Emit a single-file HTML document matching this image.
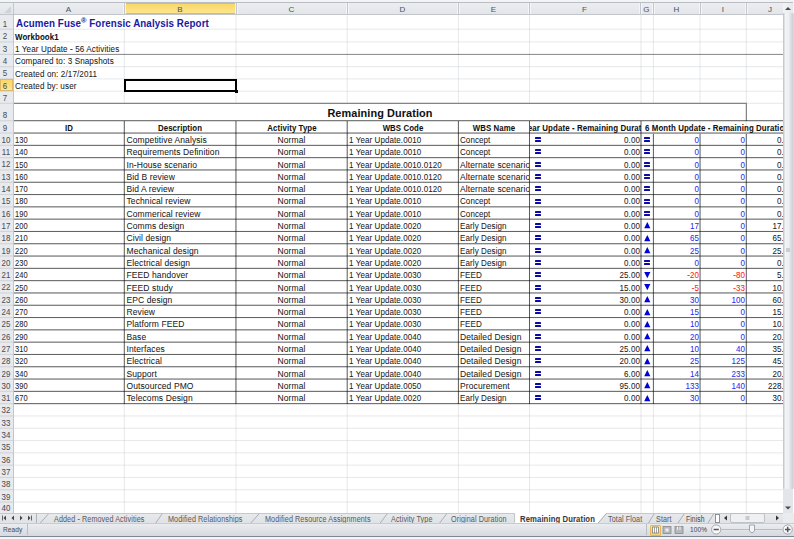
<!DOCTYPE html>
<html><head><meta charset="utf-8"><style>
html,body{margin:0;padding:0;}
body{width:794px;height:539px;overflow:hidden;position:relative;background:#fff;font-family:"Liberation Sans", sans-serif;}
div,svg{position:absolute;}
.t{white-space:nowrap;letter-spacing:0.1px;-webkit-text-stroke:0.05px currentColor}
</style></head><body>
<div style="left:0px;top:0px;width:794px;height:2px;background:#f1f3f5"></div>
<div style="left:0px;top:2px;width:793px;height:1px;background:#babec4"></div>
<div style="left:0px;top:3px;width:783px;height:11px;background:linear-gradient(#ebedf0,#e3e6e9)"></div>
<div style="left:0px;top:14px;width:783px;height:1px;background:#c2c6cc"></div>
<div style="left:124px;top:3px;width:112px;height:11px;background:linear-gradient(#f9d566,#fde88f);box-shadow:inset 0 0 0 1px #e2b860"></div>
<svg style="position:absolute;left:0;top:3px" width="13" height="11"><path d="M4 10 L11 3 L11 10 Z" fill="#d0d4da"/></svg>
<div style="left:13px;top:3px;width:1px;height:11px;background:#c3c7cd"></div>
<div style="left:123px;top:3px;width:1px;height:11px;background:#f4f5f7"></div>
<div style="left:125px;top:3px;width:1px;height:11px;background:#f4f5f7"></div>
<div style="left:124px;top:3px;width:1px;height:11px;background:#c3c7cd"></div>
<div style="left:235px;top:3px;width:1px;height:11px;background:#f4f5f7"></div>
<div style="left:237px;top:3px;width:1px;height:11px;background:#f4f5f7"></div>
<div style="left:236px;top:3px;width:1px;height:11px;background:#c3c7cd"></div>
<div style="left:346px;top:3px;width:1px;height:11px;background:#f4f5f7"></div>
<div style="left:348px;top:3px;width:1px;height:11px;background:#f4f5f7"></div>
<div style="left:347px;top:3px;width:1px;height:11px;background:#c3c7cd"></div>
<div style="left:457px;top:3px;width:1px;height:11px;background:#f4f5f7"></div>
<div style="left:459px;top:3px;width:1px;height:11px;background:#f4f5f7"></div>
<div style="left:458px;top:3px;width:1px;height:11px;background:#c3c7cd"></div>
<div style="left:528px;top:3px;width:1px;height:11px;background:#f4f5f7"></div>
<div style="left:530px;top:3px;width:1px;height:11px;background:#f4f5f7"></div>
<div style="left:529px;top:3px;width:1px;height:11px;background:#c3c7cd"></div>
<div style="left:639px;top:3px;width:1px;height:11px;background:#f4f5f7"></div>
<div style="left:641px;top:3px;width:1px;height:11px;background:#f4f5f7"></div>
<div style="left:640px;top:3px;width:1px;height:11px;background:#c3c7cd"></div>
<div style="left:652px;top:3px;width:1px;height:11px;background:#f4f5f7"></div>
<div style="left:654px;top:3px;width:1px;height:11px;background:#f4f5f7"></div>
<div style="left:653px;top:3px;width:1px;height:11px;background:#c3c7cd"></div>
<div style="left:699px;top:3px;width:1px;height:11px;background:#f4f5f7"></div>
<div style="left:701px;top:3px;width:1px;height:11px;background:#f4f5f7"></div>
<div style="left:700px;top:3px;width:1px;height:11px;background:#c3c7cd"></div>
<div style="left:745px;top:3px;width:1px;height:11px;background:#f4f5f7"></div>
<div style="left:747px;top:3px;width:1px;height:11px;background:#f4f5f7"></div>
<div style="left:746px;top:3px;width:1px;height:11px;background:#c3c7cd"></div>
<div class="t" style="left:-231.5px;width:600px;text-align:center;top:3.73px;font-size:8px;line-height:11px;font-weight:400;color:#4c5564;">A</div>
<div class="t" style="left:-120.0px;width:600px;text-align:center;top:3.73px;font-size:8px;line-height:11px;font-weight:400;color:#4c5564;">B</div>
<div class="t" style="left:-8.5px;width:600px;text-align:center;top:3.73px;font-size:8px;line-height:11px;font-weight:400;color:#4c5564;">C</div>
<div class="t" style="left:102.5px;width:600px;text-align:center;top:3.73px;font-size:8px;line-height:11px;font-weight:400;color:#4c5564;">D</div>
<div class="t" style="left:193.5px;width:600px;text-align:center;top:3.73px;font-size:8px;line-height:11px;font-weight:400;color:#4c5564;">E</div>
<div class="t" style="left:284.5px;width:600px;text-align:center;top:3.73px;font-size:8px;line-height:11px;font-weight:400;color:#4c5564;">F</div>
<div class="t" style="left:346.5px;width:600px;text-align:center;top:3.73px;font-size:8px;line-height:11px;font-weight:400;color:#4c5564;">G</div>
<div class="t" style="left:376.5px;width:600px;text-align:center;top:3.73px;font-size:8px;line-height:11px;font-weight:400;color:#4c5564;">H</div>
<div class="t" style="left:423.0px;width:600px;text-align:center;top:3.73px;font-size:8px;line-height:11px;font-weight:400;color:#4c5564;">I</div>
<div class="t" style="left:470.0px;width:600px;text-align:center;top:3.73px;font-size:8px;line-height:11px;font-weight:400;color:#4c5564;">J</div>
<div style="left:0px;top:15px;width:13px;height:498px;background:#e8eaed"></div>
<div style="left:13px;top:15px;width:1px;height:498px;background:#c2c6cc"></div>
<div style="left:0px;top:79px;width:13px;height:12px;background:linear-gradient(#f9d566,#fde88f);box-shadow:inset 0 0 0 1px #e2b860"></div>
<div style="left:0px;top:28px;width:13px;height:1px;background:rgba(190,194,200,0.180)"></div>
<div style="left:0px;top:29px;width:13px;height:1px;background:rgba(190,194,200,0.420)"></div>
<div style="left:0px;top:15px;width:13px;height:15px;overflow:hidden"><div class="t" style="left:-294.6px;width:600px;text-align:center;top:2.72px;font-size:8.6px;line-height:12px;font-weight:400;color:#4a4f58;transform:scaleX(0.92);transform-origin:center 0;">1</div></div>
<div style="left:0px;top:41px;width:13px;height:1px;background:rgba(190,194,200,0.360)"></div>
<div style="left:0px;top:42px;width:13px;height:1px;background:rgba(190,194,200,0.240)"></div>
<div style="left:0px;top:30px;width:13px;height:12px;overflow:hidden"><div class="t" style="left:-294.6px;width:600px;text-align:center;top:0.42px;font-size:8.6px;line-height:12px;font-weight:400;color:#4a4f58;transform:scaleX(0.92);transform-origin:center 0;">2</div></div>
<div style="left:0px;top:53px;width:13px;height:1px;background:rgba(190,194,200,0.060)"></div>
<div style="left:0px;top:54px;width:13px;height:1px;background:rgba(190,194,200,0.540)"></div>
<div style="left:0px;top:42px;width:13px;height:13px;overflow:hidden"><div class="t" style="left:-294.6px;width:600px;text-align:center;top:0.92px;font-size:8.6px;line-height:12px;font-weight:400;color:#4a4f58;transform:scaleX(0.92);transform-origin:center 0;">3</div></div>
<div style="left:0px;top:66px;width:13px;height:1px;background:rgba(190,194,200,0.480)"></div>
<div style="left:0px;top:67px;width:13px;height:1px;background:rgba(190,194,200,0.120)"></div>
<div style="left:0px;top:55px;width:13px;height:12px;overflow:hidden"><div class="t" style="left:-294.6px;width:600px;text-align:center;top:0.22px;font-size:8.6px;line-height:12px;font-weight:400;color:#4a4f58;transform:scaleX(0.92);transform-origin:center 0;">4</div></div>
<div style="left:0px;top:78px;width:13px;height:1px;background:rgba(190,194,200,0.360)"></div>
<div style="left:0px;top:79px;width:13px;height:1px;background:rgba(190,194,200,0.240)"></div>
<div style="left:0px;top:67px;width:13px;height:12px;overflow:hidden"><div class="t" style="left:-294.6px;width:600px;text-align:center;top:0.42px;font-size:8.6px;line-height:12px;font-weight:400;color:#4a4f58;transform:scaleX(0.92);transform-origin:center 0;">5</div></div>
<div style="left:0px;top:90px;width:13px;height:1px;background:rgba(190,194,200,0.180)"></div>
<div style="left:0px;top:91px;width:13px;height:1px;background:rgba(190,194,200,0.420)"></div>
<div style="left:0px;top:79px;width:13px;height:13px;overflow:hidden"><div class="t" style="left:-294.6px;width:600px;text-align:center;top:0.72px;font-size:8.6px;line-height:12px;font-weight:400;color:#4a4f58;transform:scaleX(0.92);transform-origin:center 0;">6</div></div>
<div style="left:0px;top:102px;width:13px;height:1px;background:rgba(190,194,200,0.120)"></div>
<div style="left:0px;top:103px;width:13px;height:1px;background:rgba(190,194,200,0.480)"></div>
<div style="left:0px;top:92px;width:13px;height:12px;overflow:hidden"><div class="t" style="left:-294.6px;width:600px;text-align:center;top:-0.18px;font-size:8.6px;line-height:12px;font-weight:400;color:#4a4f58;transform:scaleX(0.92);transform-origin:center 0;">7</div></div>
<div style="left:0px;top:120px;width:13px;height:1px;background:rgba(190,194,200,0.480)"></div>
<div style="left:0px;top:121px;width:13px;height:1px;background:rgba(190,194,200,0.120)"></div>
<div style="left:0px;top:104px;width:13px;height:17px;overflow:hidden"><div class="t" style="left:-294.6px;width:600px;text-align:center;top:5.22px;font-size:8.6px;line-height:12px;font-weight:400;color:#4a4f58;transform:scaleX(0.92);transform-origin:center 0;">8</div></div>
<div style="left:0px;top:132px;width:13px;height:1px;background:rgba(190,194,200,0.270)"></div>
<div style="left:0px;top:133px;width:13px;height:1px;background:rgba(190,194,200,0.330)"></div>
<div style="left:0px;top:121px;width:13px;height:13px;overflow:hidden"><div class="t" style="left:-294.6px;width:600px;text-align:center;top:0.57px;font-size:8.6px;line-height:12px;font-weight:400;color:#4a4f58;transform:scaleX(0.92);transform-origin:center 0;">9</div></div>
<div style="left:0px;top:144px;width:13px;height:1px;background:rgba(190,194,200,0.090)"></div>
<div style="left:0px;top:145px;width:13px;height:1px;background:rgba(190,194,200,0.510)"></div>
<div style="left:0px;top:134px;width:13px;height:12px;overflow:hidden"><div class="t" style="left:-294.2px;width:600px;text-align:center;top:-0.13px;font-size:8.6px;line-height:12px;font-weight:400;color:#4a4f58;transform:scaleX(0.92);transform-origin:center 0;">10</div></div>
<div style="left:0px;top:157px;width:13px;height:1px;background:rgba(190,194,200,0.510)"></div>
<div style="left:0px;top:158px;width:13px;height:1px;background:rgba(190,194,200,0.090)"></div>
<div style="left:0px;top:146px;width:13px;height:12px;overflow:hidden"><div class="t" style="left:-294.2px;width:600px;text-align:center;top:0.17px;font-size:8.6px;line-height:12px;font-weight:400;color:#4a4f58;transform:scaleX(0.92);transform-origin:center 0;">11</div></div>
<div style="left:0px;top:169px;width:13px;height:1px;background:rgba(190,194,200,0.330)"></div>
<div style="left:0px;top:170px;width:13px;height:1px;background:rgba(190,194,200,0.270)"></div>
<div style="left:0px;top:158px;width:13px;height:12px;overflow:hidden"><div class="t" style="left:-294.2px;width:600px;text-align:center;top:0.47px;font-size:8.6px;line-height:12px;font-weight:400;color:#4a4f58;transform:scaleX(0.92);transform-origin:center 0;">12</div></div>
<div style="left:0px;top:181px;width:13px;height:1px;background:rgba(190,194,200,0.150)"></div>
<div style="left:0px;top:182px;width:13px;height:1px;background:rgba(190,194,200,0.450)"></div>
<div style="left:0px;top:170px;width:13px;height:13px;overflow:hidden"><div class="t" style="left:-294.2px;width:600px;text-align:center;top:0.77px;font-size:8.6px;line-height:12px;font-weight:400;color:#4a4f58;transform:scaleX(0.92);transform-origin:center 0;">13</div></div>
<div style="left:0px;top:194px;width:13px;height:1px;background:rgba(190,194,200,0.570)"></div>
<div style="left:0px;top:195px;width:13px;height:1px;background:rgba(190,194,200,0.030)"></div>
<div style="left:0px;top:183px;width:13px;height:12px;overflow:hidden"><div class="t" style="left:-294.2px;width:600px;text-align:center;top:0.07px;font-size:8.6px;line-height:12px;font-weight:400;color:#4a4f58;transform:scaleX(0.92);transform-origin:center 0;">14</div></div>
<div style="left:0px;top:206px;width:13px;height:1px;background:rgba(190,194,200,0.390)"></div>
<div style="left:0px;top:207px;width:13px;height:1px;background:rgba(190,194,200,0.210)"></div>
<div style="left:0px;top:195px;width:13px;height:12px;overflow:hidden"><div class="t" style="left:-294.2px;width:600px;text-align:center;top:0.37px;font-size:8.6px;line-height:12px;font-weight:400;color:#4a4f58;transform:scaleX(0.92);transform-origin:center 0;">15</div></div>
<div style="left:0px;top:218px;width:13px;height:1px;background:rgba(190,194,200,0.210)"></div>
<div style="left:0px;top:219px;width:13px;height:1px;background:rgba(190,194,200,0.390)"></div>
<div style="left:0px;top:207px;width:13px;height:13px;overflow:hidden"><div class="t" style="left:-294.2px;width:600px;text-align:center;top:0.67px;font-size:8.6px;line-height:12px;font-weight:400;color:#4a4f58;transform:scaleX(0.92);transform-origin:center 0;">16</div></div>
<div style="left:0px;top:230px;width:13px;height:1px;background:rgba(190,194,200,0.030)"></div>
<div style="left:0px;top:231px;width:13px;height:1px;background:rgba(190,194,200,0.570)"></div>
<div style="left:0px;top:220px;width:13px;height:12px;overflow:hidden"><div class="t" style="left:-294.2px;width:600px;text-align:center;top:-0.03px;font-size:8.6px;line-height:12px;font-weight:400;color:#4a4f58;transform:scaleX(0.92);transform-origin:center 0;">17</div></div>
<div style="left:0px;top:243px;width:13px;height:1px;background:rgba(190,194,200,0.450)"></div>
<div style="left:0px;top:244px;width:13px;height:1px;background:rgba(190,194,200,0.150)"></div>
<div style="left:0px;top:232px;width:13px;height:12px;overflow:hidden"><div class="t" style="left:-294.2px;width:600px;text-align:center;top:0.27px;font-size:8.6px;line-height:12px;font-weight:400;color:#4a4f58;transform:scaleX(0.92);transform-origin:center 0;">18</div></div>
<div style="left:0px;top:255px;width:13px;height:1px;background:rgba(190,194,200,0.270)"></div>
<div style="left:0px;top:256px;width:13px;height:1px;background:rgba(190,194,200,0.330)"></div>
<div style="left:0px;top:244px;width:13px;height:13px;overflow:hidden"><div class="t" style="left:-294.2px;width:600px;text-align:center;top:0.57px;font-size:8.6px;line-height:12px;font-weight:400;color:#4a4f58;transform:scaleX(0.92);transform-origin:center 0;">19</div></div>
<div style="left:0px;top:267px;width:13px;height:1px;background:rgba(190,194,200,0.090)"></div>
<div style="left:0px;top:268px;width:13px;height:1px;background:rgba(190,194,200,0.510)"></div>
<div style="left:0px;top:257px;width:13px;height:12px;overflow:hidden"><div class="t" style="left:-294.2px;width:600px;text-align:center;top:-0.13px;font-size:8.6px;line-height:12px;font-weight:400;color:#4a4f58;transform:scaleX(0.92);transform-origin:center 0;">20</div></div>
<div style="left:0px;top:280px;width:13px;height:1px;background:rgba(190,194,200,0.510)"></div>
<div style="left:0px;top:281px;width:13px;height:1px;background:rgba(190,194,200,0.090)"></div>
<div style="left:0px;top:269px;width:13px;height:12px;overflow:hidden"><div class="t" style="left:-294.2px;width:600px;text-align:center;top:0.17px;font-size:8.6px;line-height:12px;font-weight:400;color:#4a4f58;transform:scaleX(0.92);transform-origin:center 0;">21</div></div>
<div style="left:0px;top:292px;width:13px;height:1px;background:rgba(190,194,200,0.330)"></div>
<div style="left:0px;top:293px;width:13px;height:1px;background:rgba(190,194,200,0.270)"></div>
<div style="left:0px;top:281px;width:13px;height:12px;overflow:hidden"><div class="t" style="left:-294.2px;width:600px;text-align:center;top:0.47px;font-size:8.6px;line-height:12px;font-weight:400;color:#4a4f58;transform:scaleX(0.92);transform-origin:center 0;">22</div></div>
<div style="left:0px;top:304px;width:13px;height:1px;background:rgba(190,194,200,0.150)"></div>
<div style="left:0px;top:305px;width:13px;height:1px;background:rgba(190,194,200,0.450)"></div>
<div style="left:0px;top:293px;width:13px;height:13px;overflow:hidden"><div class="t" style="left:-294.2px;width:600px;text-align:center;top:0.77px;font-size:8.6px;line-height:12px;font-weight:400;color:#4a4f58;transform:scaleX(0.92);transform-origin:center 0;">23</div></div>
<div style="left:0px;top:317px;width:13px;height:1px;background:rgba(190,194,200,0.570)"></div>
<div style="left:0px;top:318px;width:13px;height:1px;background:rgba(190,194,200,0.030)"></div>
<div style="left:0px;top:306px;width:13px;height:12px;overflow:hidden"><div class="t" style="left:-294.2px;width:600px;text-align:center;top:0.07px;font-size:8.6px;line-height:12px;font-weight:400;color:#4a4f58;transform:scaleX(0.92);transform-origin:center 0;">24</div></div>
<div style="left:0px;top:329px;width:13px;height:1px;background:rgba(190,194,200,0.390)"></div>
<div style="left:0px;top:330px;width:13px;height:1px;background:rgba(190,194,200,0.210)"></div>
<div style="left:0px;top:318px;width:13px;height:12px;overflow:hidden"><div class="t" style="left:-294.2px;width:600px;text-align:center;top:0.37px;font-size:8.6px;line-height:12px;font-weight:400;color:#4a4f58;transform:scaleX(0.92);transform-origin:center 0;">25</div></div>
<div style="left:0px;top:341px;width:13px;height:1px;background:rgba(190,194,200,0.210)"></div>
<div style="left:0px;top:342px;width:13px;height:1px;background:rgba(190,194,200,0.390)"></div>
<div style="left:0px;top:330px;width:13px;height:13px;overflow:hidden"><div class="t" style="left:-294.2px;width:600px;text-align:center;top:0.67px;font-size:8.6px;line-height:12px;font-weight:400;color:#4a4f58;transform:scaleX(0.92);transform-origin:center 0;">26</div></div>
<div style="left:0px;top:353px;width:13px;height:1px;background:rgba(190,194,200,0.030)"></div>
<div style="left:0px;top:354px;width:13px;height:1px;background:rgba(190,194,200,0.570)"></div>
<div style="left:0px;top:343px;width:13px;height:12px;overflow:hidden"><div class="t" style="left:-294.2px;width:600px;text-align:center;top:-0.03px;font-size:8.6px;line-height:12px;font-weight:400;color:#4a4f58;transform:scaleX(0.92);transform-origin:center 0;">27</div></div>
<div style="left:0px;top:366px;width:13px;height:1px;background:rgba(190,194,200,0.450)"></div>
<div style="left:0px;top:367px;width:13px;height:1px;background:rgba(190,194,200,0.150)"></div>
<div style="left:0px;top:355px;width:13px;height:12px;overflow:hidden"><div class="t" style="left:-294.2px;width:600px;text-align:center;top:0.27px;font-size:8.6px;line-height:12px;font-weight:400;color:#4a4f58;transform:scaleX(0.92);transform-origin:center 0;">28</div></div>
<div style="left:0px;top:378px;width:13px;height:1px;background:rgba(190,194,200,0.270)"></div>
<div style="left:0px;top:379px;width:13px;height:1px;background:rgba(190,194,200,0.330)"></div>
<div style="left:0px;top:367px;width:13px;height:13px;overflow:hidden"><div class="t" style="left:-294.2px;width:600px;text-align:center;top:0.57px;font-size:8.6px;line-height:12px;font-weight:400;color:#4a4f58;transform:scaleX(0.92);transform-origin:center 0;">29</div></div>
<div style="left:0px;top:390px;width:13px;height:1px;background:rgba(190,194,200,0.090)"></div>
<div style="left:0px;top:391px;width:13px;height:1px;background:rgba(190,194,200,0.510)"></div>
<div style="left:0px;top:380px;width:13px;height:12px;overflow:hidden"><div class="t" style="left:-294.2px;width:600px;text-align:center;top:-0.13px;font-size:8.6px;line-height:12px;font-weight:400;color:#4a4f58;transform:scaleX(0.92);transform-origin:center 0;">30</div></div>
<div style="left:0px;top:403px;width:13px;height:1px;background:rgba(190,194,200,0.510)"></div>
<div style="left:0px;top:404px;width:13px;height:1px;background:rgba(190,194,200,0.090)"></div>
<div style="left:0px;top:392px;width:13px;height:12px;overflow:hidden"><div class="t" style="left:-294.2px;width:600px;text-align:center;top:0.17px;font-size:8.6px;line-height:12px;font-weight:400;color:#4a4f58;transform:scaleX(0.92);transform-origin:center 0;">31</div></div>
<div style="left:0px;top:415px;width:13px;height:1px;background:rgba(190,194,200,0.330)"></div>
<div style="left:0px;top:416px;width:13px;height:1px;background:rgba(190,194,200,0.270)"></div>
<div style="left:0px;top:404px;width:13px;height:12px;overflow:hidden"><div class="t" style="left:-294.2px;width:600px;text-align:center;top:0.47px;font-size:8.6px;line-height:12px;font-weight:400;color:#4a4f58;transform:scaleX(0.92);transform-origin:center 0;">32</div></div>
<div style="left:0px;top:427px;width:13px;height:1px;background:rgba(190,194,200,0.150)"></div>
<div style="left:0px;top:428px;width:13px;height:1px;background:rgba(190,194,200,0.450)"></div>
<div style="left:0px;top:416px;width:13px;height:13px;overflow:hidden"><div class="t" style="left:-294.2px;width:600px;text-align:center;top:0.77px;font-size:8.6px;line-height:12px;font-weight:400;color:#4a4f58;transform:scaleX(0.92);transform-origin:center 0;">33</div></div>
<div style="left:0px;top:440px;width:13px;height:1px;background:rgba(190,194,200,0.570)"></div>
<div style="left:0px;top:441px;width:13px;height:1px;background:rgba(190,194,200,0.030)"></div>
<div style="left:0px;top:429px;width:13px;height:12px;overflow:hidden"><div class="t" style="left:-294.2px;width:600px;text-align:center;top:0.07px;font-size:8.6px;line-height:12px;font-weight:400;color:#4a4f58;transform:scaleX(0.92);transform-origin:center 0;">34</div></div>
<div style="left:0px;top:452px;width:13px;height:1px;background:rgba(190,194,200,0.390)"></div>
<div style="left:0px;top:453px;width:13px;height:1px;background:rgba(190,194,200,0.210)"></div>
<div style="left:0px;top:441px;width:13px;height:12px;overflow:hidden"><div class="t" style="left:-294.2px;width:600px;text-align:center;top:0.37px;font-size:8.6px;line-height:12px;font-weight:400;color:#4a4f58;transform:scaleX(0.92);transform-origin:center 0;">35</div></div>
<div style="left:0px;top:464px;width:13px;height:1px;background:rgba(190,194,200,0.210)"></div>
<div style="left:0px;top:465px;width:13px;height:1px;background:rgba(190,194,200,0.390)"></div>
<div style="left:0px;top:453px;width:13px;height:13px;overflow:hidden"><div class="t" style="left:-294.2px;width:600px;text-align:center;top:0.67px;font-size:8.6px;line-height:12px;font-weight:400;color:#4a4f58;transform:scaleX(0.92);transform-origin:center 0;">36</div></div>
<div style="left:0px;top:476px;width:13px;height:1px;background:rgba(190,194,200,0.030)"></div>
<div style="left:0px;top:477px;width:13px;height:1px;background:rgba(190,194,200,0.570)"></div>
<div style="left:0px;top:466px;width:13px;height:12px;overflow:hidden"><div class="t" style="left:-294.2px;width:600px;text-align:center;top:-0.03px;font-size:8.6px;line-height:12px;font-weight:400;color:#4a4f58;transform:scaleX(0.92);transform-origin:center 0;">37</div></div>
<div style="left:0px;top:489px;width:13px;height:1px;background:rgba(190,194,200,0.450)"></div>
<div style="left:0px;top:490px;width:13px;height:1px;background:rgba(190,194,200,0.150)"></div>
<div style="left:0px;top:478px;width:13px;height:12px;overflow:hidden"><div class="t" style="left:-294.2px;width:600px;text-align:center;top:0.27px;font-size:8.6px;line-height:12px;font-weight:400;color:#4a4f58;transform:scaleX(0.92);transform-origin:center 0;">38</div></div>
<div style="left:0px;top:501px;width:13px;height:1px;background:rgba(190,194,200,0.270)"></div>
<div style="left:0px;top:502px;width:13px;height:1px;background:rgba(190,194,200,0.330)"></div>
<div style="left:0px;top:490px;width:13px;height:13px;overflow:hidden"><div class="t" style="left:-294.2px;width:600px;text-align:center;top:0.57px;font-size:8.6px;line-height:12px;font-weight:400;color:#4a4f58;transform:scaleX(0.92);transform-origin:center 0;">39</div></div>
<div style="left:0px;top:503px;width:13px;height:10px;overflow:hidden"><div class="t" style="left:-294.2px;width:600px;text-align:center;top:-0.98px;font-size:8.6px;line-height:12px;font-weight:400;color:#4a4f58;transform:scaleX(0.92);transform-origin:center 0;">40</div></div>
<div style="left:14px;top:15px;width:769px;height:498px;background:#fff"></div>
<div style="left:14px;top:28px;width:769px;height:1px;background:rgba(196,199,204,0.126)"></div>
<div style="left:14px;top:29px;width:769px;height:1px;background:rgba(196,199,204,0.294)"></div>
<div style="left:14px;top:41px;width:769px;height:1px;background:rgba(196,199,204,0.252)"></div>
<div style="left:14px;top:42px;width:769px;height:1px;background:rgba(196,199,204,0.168)"></div>
<div style="left:14px;top:53px;width:769px;height:1px;background:rgba(196,199,204,0.042)"></div>
<div style="left:14px;top:54px;width:769px;height:1px;background:rgba(196,199,204,0.378)"></div>
<div style="left:14px;top:66px;width:769px;height:1px;background:rgba(196,199,204,0.336)"></div>
<div style="left:14px;top:67px;width:769px;height:1px;background:rgba(196,199,204,0.084)"></div>
<div style="left:14px;top:78px;width:769px;height:1px;background:rgba(196,199,204,0.252)"></div>
<div style="left:14px;top:79px;width:769px;height:1px;background:rgba(196,199,204,0.168)"></div>
<div style="left:14px;top:90px;width:769px;height:1px;background:rgba(196,199,204,0.126)"></div>
<div style="left:14px;top:91px;width:769px;height:1px;background:rgba(196,199,204,0.294)"></div>
<div style="left:14px;top:102px;width:769px;height:1px;background:rgba(196,199,204,0.084)"></div>
<div style="left:14px;top:103px;width:769px;height:1px;background:rgba(196,199,204,0.336)"></div>
<div style="left:14px;top:120px;width:769px;height:1px;background:rgba(196,199,204,0.336)"></div>
<div style="left:14px;top:121px;width:769px;height:1px;background:rgba(196,199,204,0.084)"></div>
<div style="left:14px;top:132px;width:769px;height:1px;background:rgba(196,199,204,0.189)"></div>
<div style="left:14px;top:133px;width:769px;height:1px;background:rgba(196,199,204,0.231)"></div>
<div style="left:14px;top:144px;width:769px;height:1px;background:rgba(196,199,204,0.063)"></div>
<div style="left:14px;top:145px;width:769px;height:1px;background:rgba(196,199,204,0.357)"></div>
<div style="left:14px;top:157px;width:769px;height:1px;background:rgba(196,199,204,0.357)"></div>
<div style="left:14px;top:158px;width:769px;height:1px;background:rgba(196,199,204,0.063)"></div>
<div style="left:14px;top:169px;width:769px;height:1px;background:rgba(196,199,204,0.231)"></div>
<div style="left:14px;top:170px;width:769px;height:1px;background:rgba(196,199,204,0.189)"></div>
<div style="left:14px;top:181px;width:769px;height:1px;background:rgba(196,199,204,0.105)"></div>
<div style="left:14px;top:182px;width:769px;height:1px;background:rgba(196,199,204,0.315)"></div>
<div style="left:14px;top:194px;width:769px;height:1px;background:rgba(196,199,204,0.399)"></div>
<div style="left:14px;top:195px;width:769px;height:1px;background:rgba(196,199,204,0.021)"></div>
<div style="left:14px;top:206px;width:769px;height:1px;background:rgba(196,199,204,0.273)"></div>
<div style="left:14px;top:207px;width:769px;height:1px;background:rgba(196,199,204,0.147)"></div>
<div style="left:14px;top:218px;width:769px;height:1px;background:rgba(196,199,204,0.147)"></div>
<div style="left:14px;top:219px;width:769px;height:1px;background:rgba(196,199,204,0.273)"></div>
<div style="left:14px;top:230px;width:769px;height:1px;background:rgba(196,199,204,0.021)"></div>
<div style="left:14px;top:231px;width:769px;height:1px;background:rgba(196,199,204,0.399)"></div>
<div style="left:14px;top:243px;width:769px;height:1px;background:rgba(196,199,204,0.315)"></div>
<div style="left:14px;top:244px;width:769px;height:1px;background:rgba(196,199,204,0.105)"></div>
<div style="left:14px;top:255px;width:769px;height:1px;background:rgba(196,199,204,0.189)"></div>
<div style="left:14px;top:256px;width:769px;height:1px;background:rgba(196,199,204,0.231)"></div>
<div style="left:14px;top:267px;width:769px;height:1px;background:rgba(196,199,204,0.063)"></div>
<div style="left:14px;top:268px;width:769px;height:1px;background:rgba(196,199,204,0.357)"></div>
<div style="left:14px;top:280px;width:769px;height:1px;background:rgba(196,199,204,0.357)"></div>
<div style="left:14px;top:281px;width:769px;height:1px;background:rgba(196,199,204,0.063)"></div>
<div style="left:14px;top:292px;width:769px;height:1px;background:rgba(196,199,204,0.231)"></div>
<div style="left:14px;top:293px;width:769px;height:1px;background:rgba(196,199,204,0.189)"></div>
<div style="left:14px;top:304px;width:769px;height:1px;background:rgba(196,199,204,0.105)"></div>
<div style="left:14px;top:305px;width:769px;height:1px;background:rgba(196,199,204,0.315)"></div>
<div style="left:14px;top:317px;width:769px;height:1px;background:rgba(196,199,204,0.399)"></div>
<div style="left:14px;top:318px;width:769px;height:1px;background:rgba(196,199,204,0.021)"></div>
<div style="left:14px;top:329px;width:769px;height:1px;background:rgba(196,199,204,0.273)"></div>
<div style="left:14px;top:330px;width:769px;height:1px;background:rgba(196,199,204,0.147)"></div>
<div style="left:14px;top:341px;width:769px;height:1px;background:rgba(196,199,204,0.147)"></div>
<div style="left:14px;top:342px;width:769px;height:1px;background:rgba(196,199,204,0.273)"></div>
<div style="left:14px;top:353px;width:769px;height:1px;background:rgba(196,199,204,0.021)"></div>
<div style="left:14px;top:354px;width:769px;height:1px;background:rgba(196,199,204,0.399)"></div>
<div style="left:14px;top:366px;width:769px;height:1px;background:rgba(196,199,204,0.315)"></div>
<div style="left:14px;top:367px;width:769px;height:1px;background:rgba(196,199,204,0.105)"></div>
<div style="left:14px;top:378px;width:769px;height:1px;background:rgba(196,199,204,0.189)"></div>
<div style="left:14px;top:379px;width:769px;height:1px;background:rgba(196,199,204,0.231)"></div>
<div style="left:14px;top:390px;width:769px;height:1px;background:rgba(196,199,204,0.063)"></div>
<div style="left:14px;top:391px;width:769px;height:1px;background:rgba(196,199,204,0.357)"></div>
<div style="left:14px;top:403px;width:769px;height:1px;background:rgba(196,199,204,0.357)"></div>
<div style="left:14px;top:404px;width:769px;height:1px;background:rgba(196,199,204,0.063)"></div>
<div style="left:14px;top:415px;width:769px;height:1px;background:rgba(196,199,204,0.231)"></div>
<div style="left:14px;top:416px;width:769px;height:1px;background:rgba(196,199,204,0.189)"></div>
<div style="left:14px;top:427px;width:769px;height:1px;background:rgba(196,199,204,0.105)"></div>
<div style="left:14px;top:428px;width:769px;height:1px;background:rgba(196,199,204,0.315)"></div>
<div style="left:14px;top:440px;width:769px;height:1px;background:rgba(196,199,204,0.399)"></div>
<div style="left:14px;top:441px;width:769px;height:1px;background:rgba(196,199,204,0.021)"></div>
<div style="left:14px;top:452px;width:769px;height:1px;background:rgba(196,199,204,0.273)"></div>
<div style="left:14px;top:453px;width:769px;height:1px;background:rgba(196,199,204,0.147)"></div>
<div style="left:14px;top:464px;width:769px;height:1px;background:rgba(196,199,204,0.147)"></div>
<div style="left:14px;top:465px;width:769px;height:1px;background:rgba(196,199,204,0.273)"></div>
<div style="left:14px;top:476px;width:769px;height:1px;background:rgba(196,199,204,0.021)"></div>
<div style="left:14px;top:477px;width:769px;height:1px;background:rgba(196,199,204,0.399)"></div>
<div style="left:14px;top:489px;width:769px;height:1px;background:rgba(196,199,204,0.315)"></div>
<div style="left:14px;top:490px;width:769px;height:1px;background:rgba(196,199,204,0.105)"></div>
<div style="left:14px;top:501px;width:769px;height:1px;background:rgba(196,199,204,0.189)"></div>
<div style="left:14px;top:502px;width:769px;height:1px;background:rgba(196,199,204,0.231)"></div>
<div style="left:123px;top:15px;width:1px;height:88px;background:rgba(196,199,204,0.084)"></div>
<div style="left:124px;top:15px;width:1px;height:88px;background:rgba(196,199,204,0.336)"></div>
<div style="left:123px;top:121px;width:1px;height:392px;background:rgba(196,199,204,0.084)"></div>
<div style="left:124px;top:121px;width:1px;height:392px;background:rgba(196,199,204,0.336)"></div>
<div style="left:235px;top:15px;width:1px;height:88px;background:rgba(196,199,204,0.231)"></div>
<div style="left:236px;top:15px;width:1px;height:88px;background:rgba(196,199,204,0.189)"></div>
<div style="left:235px;top:121px;width:1px;height:392px;background:rgba(196,199,204,0.231)"></div>
<div style="left:236px;top:121px;width:1px;height:392px;background:rgba(196,199,204,0.189)"></div>
<div style="left:346px;top:15px;width:1px;height:88px;background:rgba(196,199,204,0.126)"></div>
<div style="left:347px;top:15px;width:1px;height:88px;background:rgba(196,199,204,0.294)"></div>
<div style="left:346px;top:121px;width:1px;height:392px;background:rgba(196,199,204,0.126)"></div>
<div style="left:347px;top:121px;width:1px;height:392px;background:rgba(196,199,204,0.294)"></div>
<div style="left:457px;top:15px;width:1px;height:88px;background:rgba(196,199,204,0.042)"></div>
<div style="left:458px;top:15px;width:1px;height:88px;background:rgba(196,199,204,0.378)"></div>
<div style="left:457px;top:121px;width:1px;height:392px;background:rgba(196,199,204,0.042)"></div>
<div style="left:458px;top:121px;width:1px;height:392px;background:rgba(196,199,204,0.378)"></div>
<div style="left:529px;top:15px;width:1px;height:88px;background:rgba(196,199,204,0.420)"></div>
<div style="left:529px;top:121px;width:1px;height:392px;background:rgba(196,199,204,0.420)"></div>
<div style="left:640px;top:15px;width:1px;height:88px;background:rgba(196,199,204,0.210)"></div>
<div style="left:641px;top:15px;width:1px;height:88px;background:rgba(196,199,204,0.210)"></div>
<div style="left:640px;top:121px;width:1px;height:392px;background:rgba(196,199,204,0.210)"></div>
<div style="left:641px;top:121px;width:1px;height:392px;background:rgba(196,199,204,0.210)"></div>
<div style="left:652px;top:15px;width:1px;height:88px;background:rgba(196,199,204,0.042)"></div>
<div style="left:653px;top:15px;width:1px;height:88px;background:rgba(196,199,204,0.378)"></div>
<div style="left:652px;top:121px;width:1px;height:392px;background:rgba(196,199,204,0.042)"></div>
<div style="left:653px;top:121px;width:1px;height:392px;background:rgba(196,199,204,0.378)"></div>
<div style="left:699px;top:15px;width:1px;height:88px;background:rgba(196,199,204,0.189)"></div>
<div style="left:700px;top:15px;width:1px;height:88px;background:rgba(196,199,204,0.231)"></div>
<div style="left:699px;top:121px;width:1px;height:392px;background:rgba(196,199,204,0.189)"></div>
<div style="left:700px;top:121px;width:1px;height:392px;background:rgba(196,199,204,0.231)"></div>
<div style="left:745px;top:15px;width:1px;height:88px;background:rgba(196,199,204,0.084)"></div>
<div style="left:746px;top:15px;width:1px;height:88px;background:rgba(196,199,204,0.336)"></div>
<div style="left:745px;top:121px;width:1px;height:392px;background:rgba(196,199,204,0.084)"></div>
<div style="left:746px;top:121px;width:1px;height:392px;background:rgba(196,199,204,0.336)"></div>
<div style="left:124px;top:15px;width:2px;height:14px;background:#fff"></div>
<div style="left:14px;top:53px;width:769px;height:1px;background:rgba(0,0,0,0.042)"></div>
<div style="left:14px;top:54px;width:769px;height:1px;background:rgba(0,0,0,0.378)"></div>
<div style="left:14px;top:102px;width:733px;height:1px;background:rgba(0,0,0,0.110)"></div>
<div style="left:14px;top:103px;width:733px;height:1px;background:rgba(0,0,0,0.440)"></div>
<div style="left:745px;top:104px;width:1px;height:17px;background:rgba(0,0,0,0.120)"></div>
<div style="left:746px;top:104px;width:1px;height:17px;background:rgba(0,0,0,0.480)"></div>
<div style="left:14px;top:120px;width:769px;height:1px;background:rgba(0,0,0,0.480)"></div>
<div style="left:14px;top:121px;width:769px;height:1px;background:rgba(0,0,0,0.120)"></div>
<div style="left:14px;top:132px;width:769px;height:1px;background:rgba(0,0,0,0.270)"></div>
<div style="left:14px;top:133px;width:769px;height:1px;background:rgba(0,0,0,0.330)"></div>
<div style="left:14px;top:144px;width:769px;height:1px;background:rgba(0,0,0,0.090)"></div>
<div style="left:14px;top:145px;width:769px;height:1px;background:rgba(0,0,0,0.510)"></div>
<div style="left:14px;top:157px;width:769px;height:1px;background:rgba(0,0,0,0.510)"></div>
<div style="left:14px;top:158px;width:769px;height:1px;background:rgba(0,0,0,0.090)"></div>
<div style="left:14px;top:169px;width:769px;height:1px;background:rgba(0,0,0,0.330)"></div>
<div style="left:14px;top:170px;width:769px;height:1px;background:rgba(0,0,0,0.270)"></div>
<div style="left:14px;top:181px;width:769px;height:1px;background:rgba(0,0,0,0.150)"></div>
<div style="left:14px;top:182px;width:769px;height:1px;background:rgba(0,0,0,0.450)"></div>
<div style="left:14px;top:194px;width:769px;height:1px;background:rgba(0,0,0,0.570)"></div>
<div style="left:14px;top:195px;width:769px;height:1px;background:rgba(0,0,0,0.030)"></div>
<div style="left:14px;top:206px;width:769px;height:1px;background:rgba(0,0,0,0.390)"></div>
<div style="left:14px;top:207px;width:769px;height:1px;background:rgba(0,0,0,0.210)"></div>
<div style="left:14px;top:218px;width:769px;height:1px;background:rgba(0,0,0,0.210)"></div>
<div style="left:14px;top:219px;width:769px;height:1px;background:rgba(0,0,0,0.390)"></div>
<div style="left:14px;top:230px;width:769px;height:1px;background:rgba(0,0,0,0.030)"></div>
<div style="left:14px;top:231px;width:769px;height:1px;background:rgba(0,0,0,0.570)"></div>
<div style="left:14px;top:243px;width:769px;height:1px;background:rgba(0,0,0,0.450)"></div>
<div style="left:14px;top:244px;width:769px;height:1px;background:rgba(0,0,0,0.150)"></div>
<div style="left:14px;top:255px;width:769px;height:1px;background:rgba(0,0,0,0.270)"></div>
<div style="left:14px;top:256px;width:769px;height:1px;background:rgba(0,0,0,0.330)"></div>
<div style="left:14px;top:267px;width:769px;height:1px;background:rgba(0,0,0,0.090)"></div>
<div style="left:14px;top:268px;width:769px;height:1px;background:rgba(0,0,0,0.510)"></div>
<div style="left:14px;top:280px;width:769px;height:1px;background:rgba(0,0,0,0.510)"></div>
<div style="left:14px;top:281px;width:769px;height:1px;background:rgba(0,0,0,0.090)"></div>
<div style="left:14px;top:292px;width:769px;height:1px;background:rgba(0,0,0,0.330)"></div>
<div style="left:14px;top:293px;width:769px;height:1px;background:rgba(0,0,0,0.270)"></div>
<div style="left:14px;top:304px;width:769px;height:1px;background:rgba(0,0,0,0.150)"></div>
<div style="left:14px;top:305px;width:769px;height:1px;background:rgba(0,0,0,0.450)"></div>
<div style="left:14px;top:317px;width:769px;height:1px;background:rgba(0,0,0,0.570)"></div>
<div style="left:14px;top:318px;width:769px;height:1px;background:rgba(0,0,0,0.030)"></div>
<div style="left:14px;top:329px;width:769px;height:1px;background:rgba(0,0,0,0.390)"></div>
<div style="left:14px;top:330px;width:769px;height:1px;background:rgba(0,0,0,0.210)"></div>
<div style="left:14px;top:341px;width:769px;height:1px;background:rgba(0,0,0,0.210)"></div>
<div style="left:14px;top:342px;width:769px;height:1px;background:rgba(0,0,0,0.390)"></div>
<div style="left:14px;top:353px;width:769px;height:1px;background:rgba(0,0,0,0.030)"></div>
<div style="left:14px;top:354px;width:769px;height:1px;background:rgba(0,0,0,0.570)"></div>
<div style="left:14px;top:366px;width:769px;height:1px;background:rgba(0,0,0,0.450)"></div>
<div style="left:14px;top:367px;width:769px;height:1px;background:rgba(0,0,0,0.150)"></div>
<div style="left:14px;top:378px;width:769px;height:1px;background:rgba(0,0,0,0.270)"></div>
<div style="left:14px;top:379px;width:769px;height:1px;background:rgba(0,0,0,0.330)"></div>
<div style="left:14px;top:390px;width:769px;height:1px;background:rgba(0,0,0,0.090)"></div>
<div style="left:14px;top:391px;width:769px;height:1px;background:rgba(0,0,0,0.510)"></div>
<div style="left:14px;top:403px;width:769px;height:1px;background:rgba(0,0,0,0.510)"></div>
<div style="left:14px;top:404px;width:769px;height:1px;background:rgba(0,0,0,0.090)"></div>
<div style="left:123px;top:121px;width:1px;height:283px;background:rgba(0,0,0,0.120)"></div>
<div style="left:124px;top:121px;width:1px;height:283px;background:rgba(0,0,0,0.480)"></div>
<div style="left:235px;top:121px;width:1px;height:283px;background:rgba(0,0,0,0.330)"></div>
<div style="left:236px;top:121px;width:1px;height:283px;background:rgba(0,0,0,0.270)"></div>
<div style="left:346px;top:121px;width:1px;height:283px;background:rgba(0,0,0,0.180)"></div>
<div style="left:347px;top:121px;width:1px;height:283px;background:rgba(0,0,0,0.420)"></div>
<div style="left:457px;top:121px;width:1px;height:283px;background:rgba(0,0,0,0.060)"></div>
<div style="left:458px;top:121px;width:1px;height:283px;background:rgba(0,0,0,0.540)"></div>
<div style="left:529px;top:121px;width:1px;height:283px;background:rgba(0,0,0,0.600)"></div>
<div style="left:640px;top:121px;width:1px;height:283px;background:rgba(0,0,0,0.300)"></div>
<div style="left:641px;top:121px;width:1px;height:283px;background:rgba(0,0,0,0.300)"></div>
<div style="left:652px;top:134px;width:1px;height:270px;background:rgba(0,0,0,0.060)"></div>
<div style="left:653px;top:134px;width:1px;height:270px;background:rgba(0,0,0,0.540)"></div>
<div style="left:699px;top:134px;width:1px;height:270px;background:rgba(0,0,0,0.270)"></div>
<div style="left:700px;top:134px;width:1px;height:270px;background:rgba(0,0,0,0.330)"></div>
<div style="left:745px;top:134px;width:1px;height:270px;background:rgba(0,0,0,0.120)"></div>
<div style="left:746px;top:134px;width:1px;height:270px;background:rgba(0,0,0,0.480)"></div>
<div style="left:124px;top:79px;width:113px;height:13px;box-sizing:border-box;border:2px solid #000;background:transparent"></div>
<div style="left:235px;top:90px;width:3px;height:3px;background:#000"></div>
<div class="t" style="left:15.5px;top:16.84px;font-size:10px;line-height:13px;font-weight:700;color:#1a1aa4;transform:scaleX(0.975);transform-origin:left 0;">Acumen Fuse<span style='font-size:7.5px;position:relative;top:-3.5px'>®</span> Forensic Analysis Report</div>
<div class="t" style="left:15.2px;top:30.85px;font-size:8.5px;line-height:12px;font-weight:700;color:#111;transform:scaleX(0.93);transform-origin:left 0;">Workbook1</div>
<div class="t" style="left:15.2px;top:43.15px;font-size:8.5px;line-height:12px;font-weight:400;color:#222;transform:scaleX(0.955);transform-origin:left 0;">1 Year Update - 56 Activities</div>
<div class="t" style="left:15.2px;top:55.45px;font-size:8.5px;line-height:12px;font-weight:400;color:#222;transform:scaleX(0.955);transform-origin:left 0;">Compared to: 3 Snapshots</div>
<div class="t" style="left:15.2px;top:67.65px;font-size:8.5px;line-height:12px;font-weight:400;color:#222;transform:scaleX(0.955);transform-origin:left 0;">Created on: 2/17/2011</div>
<div class="t" style="left:15.2px;top:79.95px;font-size:8.5px;line-height:12px;font-weight:400;color:#222;transform:scaleX(0.955);transform-origin:left 0;">Created by: user</div>
<div class="t" style="left:80px;width:600px;text-align:center;top:106.39px;font-size:11px;line-height:15px;font-weight:700;color:#111;transform:scaleX(0.99);transform-origin:center 0;">Remaining Duration</div>
<div class="t" style="left:-231.5px;width:600px;text-align:center;top:121.90px;font-size:8.5px;line-height:12px;font-weight:700;color:#111;transform:scaleX(0.92);transform-origin:center 0;">ID</div>
<div class="t" style="left:-120.0px;width:600px;text-align:center;top:121.90px;font-size:8.5px;line-height:12px;font-weight:700;color:#111;transform:scaleX(0.92);transform-origin:center 0;">Description</div>
<div class="t" style="left:-8.5px;width:600px;text-align:center;top:121.90px;font-size:8.5px;line-height:12px;font-weight:700;color:#111;transform:scaleX(0.92);transform-origin:center 0;">Activity Type</div>
<div class="t" style="left:102.5px;width:600px;text-align:center;top:121.90px;font-size:8.5px;line-height:12px;font-weight:700;color:#111;transform:scaleX(0.92);transform-origin:center 0;">WBS Code</div>
<div class="t" style="left:193.5px;width:600px;text-align:center;top:121.90px;font-size:8.5px;line-height:12px;font-weight:700;color:#111;transform:scaleX(0.92);transform-origin:center 0;">WBS Name</div>
<div style="left:530px;top:121px;width:111px;height:12px;overflow:hidden"><div class="t" style="left:-245.5px;width:600px;text-align:center;top:0.90px;font-size:8.5px;line-height:12px;font-weight:700;color:#111;transform:scaleX(0.93);transform-origin:center 0;">1 Year Update - Remaining Duration</div></div>
<div style="left:641px;top:121px;width:142px;height:12px;overflow:hidden"><div class="t" style="left:4px;top:0.90px;font-size:8.5px;line-height:12px;font-weight:700;color:#111;transform:scaleX(0.927);transform-origin:left 0;">6 Month Update - Remaining Duration</div></div>
<div class="t" style="left:14.8px;top:133.90px;font-size:8.5px;line-height:12px;font-weight:400;color:#1a1a1a;transform:scaleX(0.88);transform-origin:left 0;">130</div>
<div class="t" style="left:126.5px;top:133.90px;font-size:8.5px;line-height:12px;font-weight:400;color:#1a1a1a;">Competitive Analysis</div>
<div class="t" style="left:-8.5px;width:600px;text-align:center;top:133.90px;font-size:8.5px;line-height:12px;font-weight:400;color:#1a1a1a;">Normal</div>
<div class="t" style="left:349px;top:133.90px;font-size:8.5px;line-height:12px;font-weight:400;color:#1a1a1a;transform:scaleX(0.94);transform-origin:left 0;">1 Year Update.0010</div>
<div style="left:459px;top:134px;width:70px;height:11px;overflow:hidden"><div class="t" style="left:1px;top:-0.10px;font-size:8.5px;line-height:12px;font-weight:400;color:#1a1a1a;transform:scaleX(0.94);transform-origin:left 0;">Concept</div></div>
<div style="left:535px;top:137px;width:6px;height:2px;background:#0a0aa6;border-radius:0.6px"></div>
<div style="left:535px;top:140px;width:6px;height:2px;background:#0a0aa6;border-radius:0.6px"></div>
<div class="t" style="left:239.79999999999995px;width:400px;text-align:right;top:133.90px;font-size:8.5px;line-height:12px;font-weight:400;color:#1a1a1a;transform:scaleX(0.94);transform-origin:right 0;">0.00</div>
<div style="left:644px;top:137px;width:6px;height:2px;background:#0a0aa6;border-radius:0.6px"></div>
<div style="left:644px;top:140px;width:6px;height:2px;background:#0a0aa6;border-radius:0.6px"></div>
<div class="t" style="left:298.6px;width:400px;text-align:right;top:133.90px;font-size:8.5px;line-height:12px;font-weight:400;color:#2a2af0;transform:scaleX(0.94);transform-origin:right 0;">0</div>
<div class="t" style="left:344.79999999999995px;width:400px;text-align:right;top:133.90px;font-size:8.5px;line-height:12px;font-weight:400;color:#2a2af0;transform:scaleX(0.94);transform-origin:right 0;">0</div>
<div style="left:747px;top:134px;width:36px;height:11px;overflow:hidden"><div class="t" style="left:-354.5px;width:400px;text-align:right;top:-0.10px;font-size:8.5px;line-height:12px;font-weight:400;color:#1a1a1a;transform:scaleX(0.94);transform-origin:right 0;">0.00</div></div>
<div class="t" style="left:14.8px;top:146.20px;font-size:8.5px;line-height:12px;font-weight:400;color:#1a1a1a;transform:scaleX(0.88);transform-origin:left 0;">140</div>
<div class="t" style="left:126.5px;top:146.20px;font-size:8.5px;line-height:12px;font-weight:400;color:#1a1a1a;">Requirements Definition</div>
<div class="t" style="left:-8.5px;width:600px;text-align:center;top:146.20px;font-size:8.5px;line-height:12px;font-weight:400;color:#1a1a1a;">Normal</div>
<div class="t" style="left:349px;top:146.20px;font-size:8.5px;line-height:12px;font-weight:400;color:#1a1a1a;transform:scaleX(0.94);transform-origin:left 0;">1 Year Update.0010</div>
<div style="left:459px;top:146px;width:70px;height:11px;overflow:hidden"><div class="t" style="left:1px;top:0.20px;font-size:8.5px;line-height:12px;font-weight:400;color:#1a1a1a;transform:scaleX(0.94);transform-origin:left 0;">Concept</div></div>
<div style="left:535px;top:149px;width:6px;height:2px;background:#0a0aa6;border-radius:0.6px"></div>
<div style="left:535px;top:152px;width:6px;height:2px;background:#0a0aa6;border-radius:0.6px"></div>
<div class="t" style="left:239.79999999999995px;width:400px;text-align:right;top:146.20px;font-size:8.5px;line-height:12px;font-weight:400;color:#1a1a1a;transform:scaleX(0.94);transform-origin:right 0;">0.00</div>
<div style="left:644px;top:149px;width:6px;height:2px;background:#0a0aa6;border-radius:0.6px"></div>
<div style="left:644px;top:152px;width:6px;height:2px;background:#0a0aa6;border-radius:0.6px"></div>
<div class="t" style="left:298.6px;width:400px;text-align:right;top:146.20px;font-size:8.5px;line-height:12px;font-weight:400;color:#2a2af0;transform:scaleX(0.94);transform-origin:right 0;">0</div>
<div class="t" style="left:344.79999999999995px;width:400px;text-align:right;top:146.20px;font-size:8.5px;line-height:12px;font-weight:400;color:#2a2af0;transform:scaleX(0.94);transform-origin:right 0;">0</div>
<div style="left:747px;top:146px;width:36px;height:11px;overflow:hidden"><div class="t" style="left:-354.5px;width:400px;text-align:right;top:0.20px;font-size:8.5px;line-height:12px;font-weight:400;color:#1a1a1a;transform:scaleX(0.94);transform-origin:right 0;">0.00</div></div>
<div class="t" style="left:14.8px;top:158.50px;font-size:8.5px;line-height:12px;font-weight:400;color:#1a1a1a;transform:scaleX(0.88);transform-origin:left 0;">150</div>
<div class="t" style="left:126.5px;top:158.50px;font-size:8.5px;line-height:12px;font-weight:400;color:#1a1a1a;">In-House scenario</div>
<div class="t" style="left:-8.5px;width:600px;text-align:center;top:158.50px;font-size:8.5px;line-height:12px;font-weight:400;color:#1a1a1a;">Normal</div>
<div class="t" style="left:349px;top:158.50px;font-size:8.5px;line-height:12px;font-weight:400;color:#1a1a1a;transform:scaleX(0.94);transform-origin:left 0;">1 Year Update.0010.0120</div>
<div style="left:459px;top:158px;width:70px;height:11px;overflow:hidden"><div class="t" style="left:1px;top:0.50px;font-size:8.5px;line-height:12px;font-weight:400;color:#1a1a1a;">Alternate scenario</div></div>
<div style="left:535px;top:162px;width:6px;height:2px;background:#0a0aa6;border-radius:0.6px"></div>
<div style="left:535px;top:165px;width:6px;height:2px;background:#0a0aa6;border-radius:0.6px"></div>
<div class="t" style="left:239.79999999999995px;width:400px;text-align:right;top:158.50px;font-size:8.5px;line-height:12px;font-weight:400;color:#1a1a1a;transform:scaleX(0.94);transform-origin:right 0;">0.00</div>
<div style="left:644px;top:162px;width:6px;height:2px;background:#0a0aa6;border-radius:0.6px"></div>
<div style="left:644px;top:165px;width:6px;height:2px;background:#0a0aa6;border-radius:0.6px"></div>
<div class="t" style="left:298.6px;width:400px;text-align:right;top:158.50px;font-size:8.5px;line-height:12px;font-weight:400;color:#2a2af0;transform:scaleX(0.94);transform-origin:right 0;">0</div>
<div class="t" style="left:344.79999999999995px;width:400px;text-align:right;top:158.50px;font-size:8.5px;line-height:12px;font-weight:400;color:#2a2af0;transform:scaleX(0.94);transform-origin:right 0;">0</div>
<div style="left:747px;top:158px;width:36px;height:11px;overflow:hidden"><div class="t" style="left:-354.5px;width:400px;text-align:right;top:0.50px;font-size:8.5px;line-height:12px;font-weight:400;color:#1a1a1a;transform:scaleX(0.94);transform-origin:right 0;">0.00</div></div>
<div class="t" style="left:14.8px;top:170.80px;font-size:8.5px;line-height:12px;font-weight:400;color:#1a1a1a;transform:scaleX(0.88);transform-origin:left 0;">160</div>
<div class="t" style="left:126.5px;top:170.80px;font-size:8.5px;line-height:12px;font-weight:400;color:#1a1a1a;">Bid B review</div>
<div class="t" style="left:-8.5px;width:600px;text-align:center;top:170.80px;font-size:8.5px;line-height:12px;font-weight:400;color:#1a1a1a;">Normal</div>
<div class="t" style="left:349px;top:170.80px;font-size:8.5px;line-height:12px;font-weight:400;color:#1a1a1a;transform:scaleX(0.94);transform-origin:left 0;">1 Year Update.0010.0120</div>
<div style="left:459px;top:170px;width:70px;height:12px;overflow:hidden"><div class="t" style="left:1px;top:0.80px;font-size:8.5px;line-height:12px;font-weight:400;color:#1a1a1a;">Alternate scenario</div></div>
<div style="left:535px;top:174px;width:6px;height:2px;background:#0a0aa6;border-radius:0.6px"></div>
<div style="left:535px;top:177px;width:6px;height:2px;background:#0a0aa6;border-radius:0.6px"></div>
<div class="t" style="left:239.79999999999995px;width:400px;text-align:right;top:170.80px;font-size:8.5px;line-height:12px;font-weight:400;color:#1a1a1a;transform:scaleX(0.94);transform-origin:right 0;">0.00</div>
<div style="left:644px;top:174px;width:6px;height:2px;background:#0a0aa6;border-radius:0.6px"></div>
<div style="left:644px;top:177px;width:6px;height:2px;background:#0a0aa6;border-radius:0.6px"></div>
<div class="t" style="left:298.6px;width:400px;text-align:right;top:170.80px;font-size:8.5px;line-height:12px;font-weight:400;color:#2a2af0;transform:scaleX(0.94);transform-origin:right 0;">0</div>
<div class="t" style="left:344.79999999999995px;width:400px;text-align:right;top:170.80px;font-size:8.5px;line-height:12px;font-weight:400;color:#2a2af0;transform:scaleX(0.94);transform-origin:right 0;">0</div>
<div style="left:747px;top:170px;width:36px;height:12px;overflow:hidden"><div class="t" style="left:-354.5px;width:400px;text-align:right;top:0.80px;font-size:8.5px;line-height:12px;font-weight:400;color:#1a1a1a;transform:scaleX(0.94);transform-origin:right 0;">0.00</div></div>
<div class="t" style="left:14.8px;top:183.10px;font-size:8.5px;line-height:12px;font-weight:400;color:#1a1a1a;transform:scaleX(0.88);transform-origin:left 0;">170</div>
<div class="t" style="left:126.5px;top:183.10px;font-size:8.5px;line-height:12px;font-weight:400;color:#1a1a1a;">Bid A review</div>
<div class="t" style="left:-8.5px;width:600px;text-align:center;top:183.10px;font-size:8.5px;line-height:12px;font-weight:400;color:#1a1a1a;">Normal</div>
<div class="t" style="left:349px;top:183.10px;font-size:8.5px;line-height:12px;font-weight:400;color:#1a1a1a;transform:scaleX(0.94);transform-origin:left 0;">1 Year Update.0010.0120</div>
<div style="left:459px;top:183px;width:70px;height:11px;overflow:hidden"><div class="t" style="left:1px;top:0.10px;font-size:8.5px;line-height:12px;font-weight:400;color:#1a1a1a;">Alternate scenario</div></div>
<div style="left:535px;top:186px;width:6px;height:2px;background:#0a0aa6;border-radius:0.6px"></div>
<div style="left:535px;top:189px;width:6px;height:2px;background:#0a0aa6;border-radius:0.6px"></div>
<div class="t" style="left:239.79999999999995px;width:400px;text-align:right;top:183.10px;font-size:8.5px;line-height:12px;font-weight:400;color:#1a1a1a;transform:scaleX(0.94);transform-origin:right 0;">0.00</div>
<div style="left:644px;top:186px;width:6px;height:2px;background:#0a0aa6;border-radius:0.6px"></div>
<div style="left:644px;top:189px;width:6px;height:2px;background:#0a0aa6;border-radius:0.6px"></div>
<div class="t" style="left:298.6px;width:400px;text-align:right;top:183.10px;font-size:8.5px;line-height:12px;font-weight:400;color:#2a2af0;transform:scaleX(0.94);transform-origin:right 0;">0</div>
<div class="t" style="left:344.79999999999995px;width:400px;text-align:right;top:183.10px;font-size:8.5px;line-height:12px;font-weight:400;color:#2a2af0;transform:scaleX(0.94);transform-origin:right 0;">0</div>
<div style="left:747px;top:183px;width:36px;height:11px;overflow:hidden"><div class="t" style="left:-354.5px;width:400px;text-align:right;top:0.10px;font-size:8.5px;line-height:12px;font-weight:400;color:#1a1a1a;transform:scaleX(0.94);transform-origin:right 0;">0.00</div></div>
<div class="t" style="left:14.8px;top:195.40px;font-size:8.5px;line-height:12px;font-weight:400;color:#1a1a1a;transform:scaleX(0.88);transform-origin:left 0;">180</div>
<div class="t" style="left:126.5px;top:195.40px;font-size:8.5px;line-height:12px;font-weight:400;color:#1a1a1a;">Technical review</div>
<div class="t" style="left:-8.5px;width:600px;text-align:center;top:195.40px;font-size:8.5px;line-height:12px;font-weight:400;color:#1a1a1a;">Normal</div>
<div class="t" style="left:349px;top:195.40px;font-size:8.5px;line-height:12px;font-weight:400;color:#1a1a1a;transform:scaleX(0.94);transform-origin:left 0;">1 Year Update.0010</div>
<div style="left:459px;top:195px;width:70px;height:11px;overflow:hidden"><div class="t" style="left:1px;top:0.40px;font-size:8.5px;line-height:12px;font-weight:400;color:#1a1a1a;transform:scaleX(0.94);transform-origin:left 0;">Concept</div></div>
<div style="left:535px;top:199px;width:6px;height:2px;background:#0a0aa6;border-radius:0.6px"></div>
<div style="left:535px;top:202px;width:6px;height:2px;background:#0a0aa6;border-radius:0.6px"></div>
<div class="t" style="left:239.79999999999995px;width:400px;text-align:right;top:195.40px;font-size:8.5px;line-height:12px;font-weight:400;color:#1a1a1a;transform:scaleX(0.94);transform-origin:right 0;">0.00</div>
<div style="left:644px;top:199px;width:6px;height:2px;background:#0a0aa6;border-radius:0.6px"></div>
<div style="left:644px;top:202px;width:6px;height:2px;background:#0a0aa6;border-radius:0.6px"></div>
<div class="t" style="left:298.6px;width:400px;text-align:right;top:195.40px;font-size:8.5px;line-height:12px;font-weight:400;color:#2a2af0;transform:scaleX(0.94);transform-origin:right 0;">0</div>
<div class="t" style="left:344.79999999999995px;width:400px;text-align:right;top:195.40px;font-size:8.5px;line-height:12px;font-weight:400;color:#2a2af0;transform:scaleX(0.94);transform-origin:right 0;">0</div>
<div style="left:747px;top:195px;width:36px;height:11px;overflow:hidden"><div class="t" style="left:-354.5px;width:400px;text-align:right;top:0.40px;font-size:8.5px;line-height:12px;font-weight:400;color:#1a1a1a;transform:scaleX(0.94);transform-origin:right 0;">0.00</div></div>
<div class="t" style="left:14.8px;top:207.70px;font-size:8.5px;line-height:12px;font-weight:400;color:#1a1a1a;transform:scaleX(0.88);transform-origin:left 0;">190</div>
<div class="t" style="left:126.5px;top:207.70px;font-size:8.5px;line-height:12px;font-weight:400;color:#1a1a1a;">Commerical review</div>
<div class="t" style="left:-8.5px;width:600px;text-align:center;top:207.70px;font-size:8.5px;line-height:12px;font-weight:400;color:#1a1a1a;">Normal</div>
<div class="t" style="left:349px;top:207.70px;font-size:8.5px;line-height:12px;font-weight:400;color:#1a1a1a;transform:scaleX(0.94);transform-origin:left 0;">1 Year Update.0010</div>
<div style="left:459px;top:207px;width:70px;height:12px;overflow:hidden"><div class="t" style="left:1px;top:0.70px;font-size:8.5px;line-height:12px;font-weight:400;color:#1a1a1a;transform:scaleX(0.94);transform-origin:left 0;">Concept</div></div>
<div style="left:535px;top:211px;width:6px;height:2px;background:#0a0aa6;border-radius:0.6px"></div>
<div style="left:535px;top:214px;width:6px;height:2px;background:#0a0aa6;border-radius:0.6px"></div>
<div class="t" style="left:239.79999999999995px;width:400px;text-align:right;top:207.70px;font-size:8.5px;line-height:12px;font-weight:400;color:#1a1a1a;transform:scaleX(0.94);transform-origin:right 0;">0.00</div>
<div style="left:644px;top:211px;width:6px;height:2px;background:#0a0aa6;border-radius:0.6px"></div>
<div style="left:644px;top:214px;width:6px;height:2px;background:#0a0aa6;border-radius:0.6px"></div>
<div class="t" style="left:298.6px;width:400px;text-align:right;top:207.70px;font-size:8.5px;line-height:12px;font-weight:400;color:#2a2af0;transform:scaleX(0.94);transform-origin:right 0;">0</div>
<div class="t" style="left:344.79999999999995px;width:400px;text-align:right;top:207.70px;font-size:8.5px;line-height:12px;font-weight:400;color:#2a2af0;transform:scaleX(0.94);transform-origin:right 0;">0</div>
<div style="left:747px;top:207px;width:36px;height:12px;overflow:hidden"><div class="t" style="left:-354.5px;width:400px;text-align:right;top:0.70px;font-size:8.5px;line-height:12px;font-weight:400;color:#1a1a1a;transform:scaleX(0.94);transform-origin:right 0;">0.00</div></div>
<div class="t" style="left:14.8px;top:220.00px;font-size:8.5px;line-height:12px;font-weight:400;color:#1a1a1a;transform:scaleX(0.88);transform-origin:left 0;">200</div>
<div class="t" style="left:126.5px;top:220.00px;font-size:8.5px;line-height:12px;font-weight:400;color:#1a1a1a;">Comms design</div>
<div class="t" style="left:-8.5px;width:600px;text-align:center;top:220.00px;font-size:8.5px;line-height:12px;font-weight:400;color:#1a1a1a;">Normal</div>
<div class="t" style="left:349px;top:220.00px;font-size:8.5px;line-height:12px;font-weight:400;color:#1a1a1a;transform:scaleX(0.94);transform-origin:left 0;">1 Year Update.0020</div>
<div style="left:459px;top:220px;width:70px;height:11px;overflow:hidden"><div class="t" style="left:1px;top:0.00px;font-size:8.5px;line-height:12px;font-weight:400;color:#1a1a1a;transform:scaleX(0.945);transform-origin:left 0;">Early Design</div></div>
<div style="left:535px;top:223px;width:6px;height:2px;background:#0a0aa6;border-radius:0.6px"></div>
<div style="left:535px;top:226px;width:6px;height:2px;background:#0a0aa6;border-radius:0.6px"></div>
<div class="t" style="left:239.79999999999995px;width:400px;text-align:right;top:220.00px;font-size:8.5px;line-height:12px;font-weight:400;color:#1a1a1a;transform:scaleX(0.94);transform-origin:right 0;">0.00</div>
<svg style="position:absolute;left:643.5px;top:222.45px" width="7" height="7"><path d="M3.3 0 L6.4 6.2 L0.2 6.2 Z" fill="#0000d8"/></svg>
<div class="t" style="left:298.6px;width:400px;text-align:right;top:220.00px;font-size:8.5px;line-height:12px;font-weight:400;color:#2a2af0;transform:scaleX(0.94);transform-origin:right 0;">17</div>
<div class="t" style="left:344.79999999999995px;width:400px;text-align:right;top:220.00px;font-size:8.5px;line-height:12px;font-weight:400;color:#2a2af0;transform:scaleX(0.94);transform-origin:right 0;">0</div>
<div style="left:747px;top:220px;width:36px;height:11px;overflow:hidden"><div class="t" style="left:-354.5px;width:400px;text-align:right;top:0.00px;font-size:8.5px;line-height:12px;font-weight:400;color:#1a1a1a;transform:scaleX(0.94);transform-origin:right 0;">17.00</div></div>
<div class="t" style="left:14.8px;top:232.30px;font-size:8.5px;line-height:12px;font-weight:400;color:#1a1a1a;transform:scaleX(0.88);transform-origin:left 0;">210</div>
<div class="t" style="left:126.5px;top:232.30px;font-size:8.5px;line-height:12px;font-weight:400;color:#1a1a1a;">Civil design</div>
<div class="t" style="left:-8.5px;width:600px;text-align:center;top:232.30px;font-size:8.5px;line-height:12px;font-weight:400;color:#1a1a1a;">Normal</div>
<div class="t" style="left:349px;top:232.30px;font-size:8.5px;line-height:12px;font-weight:400;color:#1a1a1a;transform:scaleX(0.94);transform-origin:left 0;">1 Year Update.0020</div>
<div style="left:459px;top:232px;width:70px;height:11px;overflow:hidden"><div class="t" style="left:1px;top:0.30px;font-size:8.5px;line-height:12px;font-weight:400;color:#1a1a1a;transform:scaleX(0.945);transform-origin:left 0;">Early Design</div></div>
<div style="left:535px;top:235px;width:6px;height:2px;background:#0a0aa6;border-radius:0.6px"></div>
<div style="left:535px;top:238px;width:6px;height:2px;background:#0a0aa6;border-radius:0.6px"></div>
<div class="t" style="left:239.79999999999995px;width:400px;text-align:right;top:232.30px;font-size:8.5px;line-height:12px;font-weight:400;color:#1a1a1a;transform:scaleX(0.94);transform-origin:right 0;">0.00</div>
<svg style="position:absolute;left:643.5px;top:234.75px" width="7" height="7"><path d="M3.3 0 L6.4 6.2 L0.2 6.2 Z" fill="#0000d8"/></svg>
<div class="t" style="left:298.6px;width:400px;text-align:right;top:232.30px;font-size:8.5px;line-height:12px;font-weight:400;color:#2a2af0;transform:scaleX(0.94);transform-origin:right 0;">65</div>
<div class="t" style="left:344.79999999999995px;width:400px;text-align:right;top:232.30px;font-size:8.5px;line-height:12px;font-weight:400;color:#2a2af0;transform:scaleX(0.94);transform-origin:right 0;">0</div>
<div style="left:747px;top:232px;width:36px;height:11px;overflow:hidden"><div class="t" style="left:-354.5px;width:400px;text-align:right;top:0.30px;font-size:8.5px;line-height:12px;font-weight:400;color:#1a1a1a;transform:scaleX(0.94);transform-origin:right 0;">65.00</div></div>
<div class="t" style="left:14.8px;top:244.60px;font-size:8.5px;line-height:12px;font-weight:400;color:#1a1a1a;transform:scaleX(0.88);transform-origin:left 0;">220</div>
<div class="t" style="left:126.5px;top:244.60px;font-size:8.5px;line-height:12px;font-weight:400;color:#1a1a1a;">Mechanical design</div>
<div class="t" style="left:-8.5px;width:600px;text-align:center;top:244.60px;font-size:8.5px;line-height:12px;font-weight:400;color:#1a1a1a;">Normal</div>
<div class="t" style="left:349px;top:244.60px;font-size:8.5px;line-height:12px;font-weight:400;color:#1a1a1a;transform:scaleX(0.94);transform-origin:left 0;">1 Year Update.0020</div>
<div style="left:459px;top:244px;width:70px;height:12px;overflow:hidden"><div class="t" style="left:1px;top:0.60px;font-size:8.5px;line-height:12px;font-weight:400;color:#1a1a1a;transform:scaleX(0.945);transform-origin:left 0;">Early Design</div></div>
<div style="left:535px;top:248px;width:6px;height:2px;background:#0a0aa6;border-radius:0.6px"></div>
<div style="left:535px;top:251px;width:6px;height:2px;background:#0a0aa6;border-radius:0.6px"></div>
<div class="t" style="left:239.79999999999995px;width:400px;text-align:right;top:244.60px;font-size:8.5px;line-height:12px;font-weight:400;color:#1a1a1a;transform:scaleX(0.94);transform-origin:right 0;">0.00</div>
<svg style="position:absolute;left:643.5px;top:247.05px" width="7" height="7"><path d="M3.3 0 L6.4 6.2 L0.2 6.2 Z" fill="#0000d8"/></svg>
<div class="t" style="left:298.6px;width:400px;text-align:right;top:244.60px;font-size:8.5px;line-height:12px;font-weight:400;color:#2a2af0;transform:scaleX(0.94);transform-origin:right 0;">25</div>
<div class="t" style="left:344.79999999999995px;width:400px;text-align:right;top:244.60px;font-size:8.5px;line-height:12px;font-weight:400;color:#2a2af0;transform:scaleX(0.94);transform-origin:right 0;">0</div>
<div style="left:747px;top:244px;width:36px;height:12px;overflow:hidden"><div class="t" style="left:-354.5px;width:400px;text-align:right;top:0.60px;font-size:8.5px;line-height:12px;font-weight:400;color:#1a1a1a;transform:scaleX(0.94);transform-origin:right 0;">25.00</div></div>
<div class="t" style="left:14.8px;top:256.90px;font-size:8.5px;line-height:12px;font-weight:400;color:#1a1a1a;transform:scaleX(0.88);transform-origin:left 0;">230</div>
<div class="t" style="left:126.5px;top:256.90px;font-size:8.5px;line-height:12px;font-weight:400;color:#1a1a1a;">Electrical design</div>
<div class="t" style="left:-8.5px;width:600px;text-align:center;top:256.90px;font-size:8.5px;line-height:12px;font-weight:400;color:#1a1a1a;">Normal</div>
<div class="t" style="left:349px;top:256.90px;font-size:8.5px;line-height:12px;font-weight:400;color:#1a1a1a;transform:scaleX(0.94);transform-origin:left 0;">1 Year Update.0020</div>
<div style="left:459px;top:257px;width:70px;height:11px;overflow:hidden"><div class="t" style="left:1px;top:-0.10px;font-size:8.5px;line-height:12px;font-weight:400;color:#1a1a1a;transform:scaleX(0.945);transform-origin:left 0;">Early Design</div></div>
<div style="left:535px;top:260px;width:6px;height:2px;background:#0a0aa6;border-radius:0.6px"></div>
<div style="left:535px;top:263px;width:6px;height:2px;background:#0a0aa6;border-radius:0.6px"></div>
<div class="t" style="left:239.79999999999995px;width:400px;text-align:right;top:256.90px;font-size:8.5px;line-height:12px;font-weight:400;color:#1a1a1a;transform:scaleX(0.94);transform-origin:right 0;">0.00</div>
<div style="left:644px;top:260px;width:6px;height:2px;background:#0a0aa6;border-radius:0.6px"></div>
<div style="left:644px;top:263px;width:6px;height:2px;background:#0a0aa6;border-radius:0.6px"></div>
<div class="t" style="left:298.6px;width:400px;text-align:right;top:256.90px;font-size:8.5px;line-height:12px;font-weight:400;color:#2a2af0;transform:scaleX(0.94);transform-origin:right 0;">0</div>
<div class="t" style="left:344.79999999999995px;width:400px;text-align:right;top:256.90px;font-size:8.5px;line-height:12px;font-weight:400;color:#2a2af0;transform:scaleX(0.94);transform-origin:right 0;">0</div>
<div style="left:747px;top:257px;width:36px;height:11px;overflow:hidden"><div class="t" style="left:-354.5px;width:400px;text-align:right;top:-0.10px;font-size:8.5px;line-height:12px;font-weight:400;color:#1a1a1a;transform:scaleX(0.94);transform-origin:right 0;">0.00</div></div>
<div class="t" style="left:14.8px;top:269.20px;font-size:8.5px;line-height:12px;font-weight:400;color:#1a1a1a;transform:scaleX(0.88);transform-origin:left 0;">240</div>
<div class="t" style="left:126.5px;top:269.20px;font-size:8.5px;line-height:12px;font-weight:400;color:#1a1a1a;">FEED handover</div>
<div class="t" style="left:-8.5px;width:600px;text-align:center;top:269.20px;font-size:8.5px;line-height:12px;font-weight:400;color:#1a1a1a;">Normal</div>
<div class="t" style="left:349px;top:269.20px;font-size:8.5px;line-height:12px;font-weight:400;color:#1a1a1a;transform:scaleX(0.94);transform-origin:left 0;">1 Year Update.0030</div>
<div style="left:459px;top:269px;width:70px;height:11px;overflow:hidden"><div class="t" style="left:1px;top:0.20px;font-size:8.5px;line-height:12px;font-weight:400;color:#1a1a1a;transform:scaleX(0.95);transform-origin:left 0;">FEED</div></div>
<div style="left:535px;top:272px;width:6px;height:2px;background:#0a0aa6;border-radius:0.6px"></div>
<div style="left:535px;top:275px;width:6px;height:2px;background:#0a0aa6;border-radius:0.6px"></div>
<div class="t" style="left:239.79999999999995px;width:400px;text-align:right;top:269.20px;font-size:8.5px;line-height:12px;font-weight:400;color:#1a1a1a;transform:scaleX(0.94);transform-origin:right 0;">25.00</div>
<svg style="position:absolute;left:643.5px;top:271.65px" width="7" height="7"><path d="M0.2 0 L6.4 0 L3.3 6.2 Z" fill="#0000d8"/></svg>
<div class="t" style="left:298.6px;width:400px;text-align:right;top:269.20px;font-size:8.5px;line-height:12px;font-weight:400;color:#ff2020;transform:scaleX(0.94);transform-origin:right 0;">-20</div>
<div class="t" style="left:344.79999999999995px;width:400px;text-align:right;top:269.20px;font-size:8.5px;line-height:12px;font-weight:400;color:#ff2020;transform:scaleX(0.94);transform-origin:right 0;">-80</div>
<div style="left:747px;top:269px;width:36px;height:11px;overflow:hidden"><div class="t" style="left:-354.5px;width:400px;text-align:right;top:0.20px;font-size:8.5px;line-height:12px;font-weight:400;color:#1a1a1a;transform:scaleX(0.94);transform-origin:right 0;">5.00</div></div>
<div class="t" style="left:14.8px;top:281.50px;font-size:8.5px;line-height:12px;font-weight:400;color:#1a1a1a;transform:scaleX(0.88);transform-origin:left 0;">250</div>
<div class="t" style="left:126.5px;top:281.50px;font-size:8.5px;line-height:12px;font-weight:400;color:#1a1a1a;">FEED study</div>
<div class="t" style="left:-8.5px;width:600px;text-align:center;top:281.50px;font-size:8.5px;line-height:12px;font-weight:400;color:#1a1a1a;">Normal</div>
<div class="t" style="left:349px;top:281.50px;font-size:8.5px;line-height:12px;font-weight:400;color:#1a1a1a;transform:scaleX(0.94);transform-origin:left 0;">1 Year Update.0030</div>
<div style="left:459px;top:281px;width:70px;height:11px;overflow:hidden"><div class="t" style="left:1px;top:0.50px;font-size:8.5px;line-height:12px;font-weight:400;color:#1a1a1a;transform:scaleX(0.95);transform-origin:left 0;">FEED</div></div>
<div style="left:535px;top:285px;width:6px;height:2px;background:#0a0aa6;border-radius:0.6px"></div>
<div style="left:535px;top:288px;width:6px;height:2px;background:#0a0aa6;border-radius:0.6px"></div>
<div class="t" style="left:239.79999999999995px;width:400px;text-align:right;top:281.50px;font-size:8.5px;line-height:12px;font-weight:400;color:#1a1a1a;transform:scaleX(0.94);transform-origin:right 0;">15.00</div>
<svg style="position:absolute;left:643.5px;top:283.95px" width="7" height="7"><path d="M0.2 0 L6.4 0 L3.3 6.2 Z" fill="#0000d8"/></svg>
<div class="t" style="left:298.6px;width:400px;text-align:right;top:281.50px;font-size:8.5px;line-height:12px;font-weight:400;color:#ff2020;transform:scaleX(0.94);transform-origin:right 0;">-5</div>
<div class="t" style="left:344.79999999999995px;width:400px;text-align:right;top:281.50px;font-size:8.5px;line-height:12px;font-weight:400;color:#ff2020;transform:scaleX(0.94);transform-origin:right 0;">-33</div>
<div style="left:747px;top:281px;width:36px;height:11px;overflow:hidden"><div class="t" style="left:-354.5px;width:400px;text-align:right;top:0.50px;font-size:8.5px;line-height:12px;font-weight:400;color:#1a1a1a;transform:scaleX(0.94);transform-origin:right 0;">10.00</div></div>
<div class="t" style="left:14.8px;top:293.80px;font-size:8.5px;line-height:12px;font-weight:400;color:#1a1a1a;transform:scaleX(0.88);transform-origin:left 0;">260</div>
<div class="t" style="left:126.5px;top:293.80px;font-size:8.5px;line-height:12px;font-weight:400;color:#1a1a1a;">EPC design</div>
<div class="t" style="left:-8.5px;width:600px;text-align:center;top:293.80px;font-size:8.5px;line-height:12px;font-weight:400;color:#1a1a1a;">Normal</div>
<div class="t" style="left:349px;top:293.80px;font-size:8.5px;line-height:12px;font-weight:400;color:#1a1a1a;transform:scaleX(0.94);transform-origin:left 0;">1 Year Update.0030</div>
<div style="left:459px;top:293px;width:70px;height:12px;overflow:hidden"><div class="t" style="left:1px;top:0.80px;font-size:8.5px;line-height:12px;font-weight:400;color:#1a1a1a;transform:scaleX(0.95);transform-origin:left 0;">FEED</div></div>
<div style="left:535px;top:297px;width:6px;height:2px;background:#0a0aa6;border-radius:0.6px"></div>
<div style="left:535px;top:300px;width:6px;height:2px;background:#0a0aa6;border-radius:0.6px"></div>
<div class="t" style="left:239.79999999999995px;width:400px;text-align:right;top:293.80px;font-size:8.5px;line-height:12px;font-weight:400;color:#1a1a1a;transform:scaleX(0.94);transform-origin:right 0;">30.00</div>
<svg style="position:absolute;left:643.5px;top:296.25px" width="7" height="7"><path d="M3.3 0 L6.4 6.2 L0.2 6.2 Z" fill="#0000d8"/></svg>
<div class="t" style="left:298.6px;width:400px;text-align:right;top:293.80px;font-size:8.5px;line-height:12px;font-weight:400;color:#2a2af0;transform:scaleX(0.94);transform-origin:right 0;">30</div>
<div class="t" style="left:344.79999999999995px;width:400px;text-align:right;top:293.80px;font-size:8.5px;line-height:12px;font-weight:400;color:#2a2af0;transform:scaleX(0.94);transform-origin:right 0;">100</div>
<div style="left:747px;top:293px;width:36px;height:12px;overflow:hidden"><div class="t" style="left:-354.5px;width:400px;text-align:right;top:0.80px;font-size:8.5px;line-height:12px;font-weight:400;color:#1a1a1a;transform:scaleX(0.94);transform-origin:right 0;">60.00</div></div>
<div class="t" style="left:14.8px;top:306.10px;font-size:8.5px;line-height:12px;font-weight:400;color:#1a1a1a;transform:scaleX(0.88);transform-origin:left 0;">270</div>
<div class="t" style="left:126.5px;top:306.10px;font-size:8.5px;line-height:12px;font-weight:400;color:#1a1a1a;">Review</div>
<div class="t" style="left:-8.5px;width:600px;text-align:center;top:306.10px;font-size:8.5px;line-height:12px;font-weight:400;color:#1a1a1a;">Normal</div>
<div class="t" style="left:349px;top:306.10px;font-size:8.5px;line-height:12px;font-weight:400;color:#1a1a1a;transform:scaleX(0.94);transform-origin:left 0;">1 Year Update.0030</div>
<div style="left:459px;top:306px;width:70px;height:11px;overflow:hidden"><div class="t" style="left:1px;top:0.10px;font-size:8.5px;line-height:12px;font-weight:400;color:#1a1a1a;transform:scaleX(0.95);transform-origin:left 0;">FEED</div></div>
<div style="left:535px;top:309px;width:6px;height:2px;background:#0a0aa6;border-radius:0.6px"></div>
<div style="left:535px;top:312px;width:6px;height:2px;background:#0a0aa6;border-radius:0.6px"></div>
<div class="t" style="left:239.79999999999995px;width:400px;text-align:right;top:306.10px;font-size:8.5px;line-height:12px;font-weight:400;color:#1a1a1a;transform:scaleX(0.94);transform-origin:right 0;">0.00</div>
<svg style="position:absolute;left:643.5px;top:308.55px" width="7" height="7"><path d="M3.3 0 L6.4 6.2 L0.2 6.2 Z" fill="#0000d8"/></svg>
<div class="t" style="left:298.6px;width:400px;text-align:right;top:306.10px;font-size:8.5px;line-height:12px;font-weight:400;color:#2a2af0;transform:scaleX(0.94);transform-origin:right 0;">15</div>
<div class="t" style="left:344.79999999999995px;width:400px;text-align:right;top:306.10px;font-size:8.5px;line-height:12px;font-weight:400;color:#2a2af0;transform:scaleX(0.94);transform-origin:right 0;">0</div>
<div style="left:747px;top:306px;width:36px;height:11px;overflow:hidden"><div class="t" style="left:-354.5px;width:400px;text-align:right;top:0.10px;font-size:8.5px;line-height:12px;font-weight:400;color:#1a1a1a;transform:scaleX(0.94);transform-origin:right 0;">15.00</div></div>
<div class="t" style="left:14.8px;top:318.40px;font-size:8.5px;line-height:12px;font-weight:400;color:#1a1a1a;transform:scaleX(0.88);transform-origin:left 0;">280</div>
<div class="t" style="left:126.5px;top:318.40px;font-size:8.5px;line-height:12px;font-weight:400;color:#1a1a1a;">Platform FEED</div>
<div class="t" style="left:-8.5px;width:600px;text-align:center;top:318.40px;font-size:8.5px;line-height:12px;font-weight:400;color:#1a1a1a;">Normal</div>
<div class="t" style="left:349px;top:318.40px;font-size:8.5px;line-height:12px;font-weight:400;color:#1a1a1a;transform:scaleX(0.94);transform-origin:left 0;">1 Year Update.0030</div>
<div style="left:459px;top:318px;width:70px;height:11px;overflow:hidden"><div class="t" style="left:1px;top:0.40px;font-size:8.5px;line-height:12px;font-weight:400;color:#1a1a1a;transform:scaleX(0.95);transform-origin:left 0;">FEED</div></div>
<div style="left:535px;top:322px;width:6px;height:2px;background:#0a0aa6;border-radius:0.6px"></div>
<div style="left:535px;top:325px;width:6px;height:2px;background:#0a0aa6;border-radius:0.6px"></div>
<div class="t" style="left:239.79999999999995px;width:400px;text-align:right;top:318.40px;font-size:8.5px;line-height:12px;font-weight:400;color:#1a1a1a;transform:scaleX(0.94);transform-origin:right 0;">0.00</div>
<svg style="position:absolute;left:643.5px;top:320.85px" width="7" height="7"><path d="M3.3 0 L6.4 6.2 L0.2 6.2 Z" fill="#0000d8"/></svg>
<div class="t" style="left:298.6px;width:400px;text-align:right;top:318.40px;font-size:8.5px;line-height:12px;font-weight:400;color:#2a2af0;transform:scaleX(0.94);transform-origin:right 0;">10</div>
<div class="t" style="left:344.79999999999995px;width:400px;text-align:right;top:318.40px;font-size:8.5px;line-height:12px;font-weight:400;color:#2a2af0;transform:scaleX(0.94);transform-origin:right 0;">0</div>
<div style="left:747px;top:318px;width:36px;height:11px;overflow:hidden"><div class="t" style="left:-354.5px;width:400px;text-align:right;top:0.40px;font-size:8.5px;line-height:12px;font-weight:400;color:#1a1a1a;transform:scaleX(0.94);transform-origin:right 0;">10.00</div></div>
<div class="t" style="left:14.8px;top:330.70px;font-size:8.5px;line-height:12px;font-weight:400;color:#1a1a1a;transform:scaleX(0.88);transform-origin:left 0;">290</div>
<div class="t" style="left:126.5px;top:330.70px;font-size:8.5px;line-height:12px;font-weight:400;color:#1a1a1a;">Base</div>
<div class="t" style="left:-8.5px;width:600px;text-align:center;top:330.70px;font-size:8.5px;line-height:12px;font-weight:400;color:#1a1a1a;">Normal</div>
<div class="t" style="left:349px;top:330.70px;font-size:8.5px;line-height:12px;font-weight:400;color:#1a1a1a;transform:scaleX(0.94);transform-origin:left 0;">1 Year Update.0040</div>
<div style="left:459px;top:330px;width:70px;height:12px;overflow:hidden"><div class="t" style="left:1px;top:0.70px;font-size:8.5px;line-height:12px;font-weight:400;color:#1a1a1a;">Detailed Design</div></div>
<div style="left:535px;top:334px;width:6px;height:2px;background:#0a0aa6;border-radius:0.6px"></div>
<div style="left:535px;top:337px;width:6px;height:2px;background:#0a0aa6;border-radius:0.6px"></div>
<div class="t" style="left:239.79999999999995px;width:400px;text-align:right;top:330.70px;font-size:8.5px;line-height:12px;font-weight:400;color:#1a1a1a;transform:scaleX(0.94);transform-origin:right 0;">0.00</div>
<svg style="position:absolute;left:643.5px;top:333.15px" width="7" height="7"><path d="M3.3 0 L6.4 6.2 L0.2 6.2 Z" fill="#0000d8"/></svg>
<div class="t" style="left:298.6px;width:400px;text-align:right;top:330.70px;font-size:8.5px;line-height:12px;font-weight:400;color:#2a2af0;transform:scaleX(0.94);transform-origin:right 0;">20</div>
<div class="t" style="left:344.79999999999995px;width:400px;text-align:right;top:330.70px;font-size:8.5px;line-height:12px;font-weight:400;color:#2a2af0;transform:scaleX(0.94);transform-origin:right 0;">0</div>
<div style="left:747px;top:330px;width:36px;height:12px;overflow:hidden"><div class="t" style="left:-354.5px;width:400px;text-align:right;top:0.70px;font-size:8.5px;line-height:12px;font-weight:400;color:#1a1a1a;transform:scaleX(0.94);transform-origin:right 0;">20.00</div></div>
<div class="t" style="left:14.8px;top:343.00px;font-size:8.5px;line-height:12px;font-weight:400;color:#1a1a1a;transform:scaleX(0.88);transform-origin:left 0;">310</div>
<div class="t" style="left:126.5px;top:343.00px;font-size:8.5px;line-height:12px;font-weight:400;color:#1a1a1a;">Interfaces</div>
<div class="t" style="left:-8.5px;width:600px;text-align:center;top:343.00px;font-size:8.5px;line-height:12px;font-weight:400;color:#1a1a1a;">Normal</div>
<div class="t" style="left:349px;top:343.00px;font-size:8.5px;line-height:12px;font-weight:400;color:#1a1a1a;transform:scaleX(0.94);transform-origin:left 0;">1 Year Update.0040</div>
<div style="left:459px;top:343px;width:70px;height:11px;overflow:hidden"><div class="t" style="left:1px;top:0.00px;font-size:8.5px;line-height:12px;font-weight:400;color:#1a1a1a;">Detailed Design</div></div>
<div style="left:535px;top:346px;width:6px;height:2px;background:#0a0aa6;border-radius:0.6px"></div>
<div style="left:535px;top:349px;width:6px;height:2px;background:#0a0aa6;border-radius:0.6px"></div>
<div class="t" style="left:239.79999999999995px;width:400px;text-align:right;top:343.00px;font-size:8.5px;line-height:12px;font-weight:400;color:#1a1a1a;transform:scaleX(0.94);transform-origin:right 0;">25.00</div>
<svg style="position:absolute;left:643.5px;top:345.45px" width="7" height="7"><path d="M3.3 0 L6.4 6.2 L0.2 6.2 Z" fill="#0000d8"/></svg>
<div class="t" style="left:298.6px;width:400px;text-align:right;top:343.00px;font-size:8.5px;line-height:12px;font-weight:400;color:#2a2af0;transform:scaleX(0.94);transform-origin:right 0;">10</div>
<div class="t" style="left:344.79999999999995px;width:400px;text-align:right;top:343.00px;font-size:8.5px;line-height:12px;font-weight:400;color:#2a2af0;transform:scaleX(0.94);transform-origin:right 0;">40</div>
<div style="left:747px;top:343px;width:36px;height:11px;overflow:hidden"><div class="t" style="left:-354.5px;width:400px;text-align:right;top:0.00px;font-size:8.5px;line-height:12px;font-weight:400;color:#1a1a1a;transform:scaleX(0.94);transform-origin:right 0;">35.00</div></div>
<div class="t" style="left:14.8px;top:355.30px;font-size:8.5px;line-height:12px;font-weight:400;color:#1a1a1a;transform:scaleX(0.88);transform-origin:left 0;">320</div>
<div class="t" style="left:126.5px;top:355.30px;font-size:8.5px;line-height:12px;font-weight:400;color:#1a1a1a;">Electrical</div>
<div class="t" style="left:-8.5px;width:600px;text-align:center;top:355.30px;font-size:8.5px;line-height:12px;font-weight:400;color:#1a1a1a;">Normal</div>
<div class="t" style="left:349px;top:355.30px;font-size:8.5px;line-height:12px;font-weight:400;color:#1a1a1a;transform:scaleX(0.94);transform-origin:left 0;">1 Year Update.0040</div>
<div style="left:459px;top:355px;width:70px;height:11px;overflow:hidden"><div class="t" style="left:1px;top:0.30px;font-size:8.5px;line-height:12px;font-weight:400;color:#1a1a1a;">Detailed Design</div></div>
<div style="left:535px;top:358px;width:6px;height:2px;background:#0a0aa6;border-radius:0.6px"></div>
<div style="left:535px;top:361px;width:6px;height:2px;background:#0a0aa6;border-radius:0.6px"></div>
<div class="t" style="left:239.79999999999995px;width:400px;text-align:right;top:355.30px;font-size:8.5px;line-height:12px;font-weight:400;color:#1a1a1a;transform:scaleX(0.94);transform-origin:right 0;">20.00</div>
<svg style="position:absolute;left:643.5px;top:357.75px" width="7" height="7"><path d="M3.3 0 L6.4 6.2 L0.2 6.2 Z" fill="#0000d8"/></svg>
<div class="t" style="left:298.6px;width:400px;text-align:right;top:355.30px;font-size:8.5px;line-height:12px;font-weight:400;color:#2a2af0;transform:scaleX(0.94);transform-origin:right 0;">25</div>
<div class="t" style="left:344.79999999999995px;width:400px;text-align:right;top:355.30px;font-size:8.5px;line-height:12px;font-weight:400;color:#2a2af0;transform:scaleX(0.94);transform-origin:right 0;">125</div>
<div style="left:747px;top:355px;width:36px;height:11px;overflow:hidden"><div class="t" style="left:-354.5px;width:400px;text-align:right;top:0.30px;font-size:8.5px;line-height:12px;font-weight:400;color:#1a1a1a;transform:scaleX(0.94);transform-origin:right 0;">45.00</div></div>
<div class="t" style="left:14.8px;top:367.60px;font-size:8.5px;line-height:12px;font-weight:400;color:#1a1a1a;transform:scaleX(0.88);transform-origin:left 0;">340</div>
<div class="t" style="left:126.5px;top:367.60px;font-size:8.5px;line-height:12px;font-weight:400;color:#1a1a1a;">Support</div>
<div class="t" style="left:-8.5px;width:600px;text-align:center;top:367.60px;font-size:8.5px;line-height:12px;font-weight:400;color:#1a1a1a;">Normal</div>
<div class="t" style="left:349px;top:367.60px;font-size:8.5px;line-height:12px;font-weight:400;color:#1a1a1a;transform:scaleX(0.94);transform-origin:left 0;">1 Year Update.0040</div>
<div style="left:459px;top:367px;width:70px;height:12px;overflow:hidden"><div class="t" style="left:1px;top:0.60px;font-size:8.5px;line-height:12px;font-weight:400;color:#1a1a1a;">Detailed Design</div></div>
<div style="left:535px;top:371px;width:6px;height:2px;background:#0a0aa6;border-radius:0.6px"></div>
<div style="left:535px;top:374px;width:6px;height:2px;background:#0a0aa6;border-radius:0.6px"></div>
<div class="t" style="left:239.79999999999995px;width:400px;text-align:right;top:367.60px;font-size:8.5px;line-height:12px;font-weight:400;color:#1a1a1a;transform:scaleX(0.94);transform-origin:right 0;">6.00</div>
<svg style="position:absolute;left:643.5px;top:370.05px" width="7" height="7"><path d="M3.3 0 L6.4 6.2 L0.2 6.2 Z" fill="#0000d8"/></svg>
<div class="t" style="left:298.6px;width:400px;text-align:right;top:367.60px;font-size:8.5px;line-height:12px;font-weight:400;color:#2a2af0;transform:scaleX(0.94);transform-origin:right 0;">14</div>
<div class="t" style="left:344.79999999999995px;width:400px;text-align:right;top:367.60px;font-size:8.5px;line-height:12px;font-weight:400;color:#2a2af0;transform:scaleX(0.94);transform-origin:right 0;">233</div>
<div style="left:747px;top:367px;width:36px;height:12px;overflow:hidden"><div class="t" style="left:-354.5px;width:400px;text-align:right;top:0.60px;font-size:8.5px;line-height:12px;font-weight:400;color:#1a1a1a;transform:scaleX(0.94);transform-origin:right 0;">20.00</div></div>
<div class="t" style="left:14.8px;top:379.90px;font-size:8.5px;line-height:12px;font-weight:400;color:#1a1a1a;transform:scaleX(0.88);transform-origin:left 0;">390</div>
<div class="t" style="left:126.5px;top:379.90px;font-size:8.5px;line-height:12px;font-weight:400;color:#1a1a1a;">Outsourced PMO</div>
<div class="t" style="left:-8.5px;width:600px;text-align:center;top:379.90px;font-size:8.5px;line-height:12px;font-weight:400;color:#1a1a1a;">Normal</div>
<div class="t" style="left:349px;top:379.90px;font-size:8.5px;line-height:12px;font-weight:400;color:#1a1a1a;transform:scaleX(0.94);transform-origin:left 0;">1 Year Update.0050</div>
<div style="left:459px;top:380px;width:70px;height:11px;overflow:hidden"><div class="t" style="left:1px;top:-0.10px;font-size:8.5px;line-height:12px;font-weight:400;color:#1a1a1a;">Procurement</div></div>
<div style="left:535px;top:383px;width:6px;height:2px;background:#0a0aa6;border-radius:0.6px"></div>
<div style="left:535px;top:386px;width:6px;height:2px;background:#0a0aa6;border-radius:0.6px"></div>
<div class="t" style="left:239.79999999999995px;width:400px;text-align:right;top:379.90px;font-size:8.5px;line-height:12px;font-weight:400;color:#1a1a1a;transform:scaleX(0.94);transform-origin:right 0;">95.00</div>
<svg style="position:absolute;left:643.5px;top:382.35px" width="7" height="7"><path d="M3.3 0 L6.4 6.2 L0.2 6.2 Z" fill="#0000d8"/></svg>
<div class="t" style="left:298.6px;width:400px;text-align:right;top:379.90px;font-size:8.5px;line-height:12px;font-weight:400;color:#2a2af0;transform:scaleX(0.94);transform-origin:right 0;">133</div>
<div class="t" style="left:344.79999999999995px;width:400px;text-align:right;top:379.90px;font-size:8.5px;line-height:12px;font-weight:400;color:#2a2af0;transform:scaleX(0.94);transform-origin:right 0;">140</div>
<div style="left:747px;top:380px;width:36px;height:11px;overflow:hidden"><div class="t" style="left:-354.5px;width:400px;text-align:right;top:-0.10px;font-size:8.5px;line-height:12px;font-weight:400;color:#1a1a1a;transform:scaleX(0.94);transform-origin:right 0;">228.00</div></div>
<div class="t" style="left:14.8px;top:392.20px;font-size:8.5px;line-height:12px;font-weight:400;color:#1a1a1a;transform:scaleX(0.88);transform-origin:left 0;">670</div>
<div class="t" style="left:126.5px;top:392.20px;font-size:8.5px;line-height:12px;font-weight:400;color:#1a1a1a;">Telecoms Design</div>
<div class="t" style="left:-8.5px;width:600px;text-align:center;top:392.20px;font-size:8.5px;line-height:12px;font-weight:400;color:#1a1a1a;">Normal</div>
<div class="t" style="left:349px;top:392.20px;font-size:8.5px;line-height:12px;font-weight:400;color:#1a1a1a;transform:scaleX(0.94);transform-origin:left 0;">1 Year Update.0020</div>
<div style="left:459px;top:392px;width:70px;height:11px;overflow:hidden"><div class="t" style="left:1px;top:0.20px;font-size:8.5px;line-height:12px;font-weight:400;color:#1a1a1a;transform:scaleX(0.945);transform-origin:left 0;">Early Design</div></div>
<div style="left:535px;top:395px;width:6px;height:2px;background:#0a0aa6;border-radius:0.6px"></div>
<div style="left:535px;top:398px;width:6px;height:2px;background:#0a0aa6;border-radius:0.6px"></div>
<div class="t" style="left:239.79999999999995px;width:400px;text-align:right;top:392.20px;font-size:8.5px;line-height:12px;font-weight:400;color:#1a1a1a;transform:scaleX(0.94);transform-origin:right 0;">0.00</div>
<svg style="position:absolute;left:643.5px;top:394.65px" width="7" height="7"><path d="M3.3 0 L6.4 6.2 L0.2 6.2 Z" fill="#0000d8"/></svg>
<div class="t" style="left:298.6px;width:400px;text-align:right;top:392.20px;font-size:8.5px;line-height:12px;font-weight:400;color:#2a2af0;transform:scaleX(0.94);transform-origin:right 0;">30</div>
<div class="t" style="left:344.79999999999995px;width:400px;text-align:right;top:392.20px;font-size:8.5px;line-height:12px;font-weight:400;color:#2a2af0;transform:scaleX(0.94);transform-origin:right 0;">0</div>
<div style="left:747px;top:392px;width:36px;height:11px;overflow:hidden"><div class="t" style="left:-354.5px;width:400px;text-align:right;top:0.20px;font-size:8.5px;line-height:12px;font-weight:400;color:#1a1a1a;transform:scaleX(0.94);transform-origin:right 0;">30.00</div></div>
<div style="left:783px;top:3px;width:10px;height:510px;background:#e2e5e9"></div>
<div style="left:783px;top:3px;width:10px;height:11px;background:linear-gradient(90deg,#f1f3f5,#e6e9ec)"></div>
<svg style="position:absolute;left:783px;top:4px" width="10" height="9"><path d="M2 6 L5 3 L8 6 Z" fill="#4a4a4a"/></svg>
<div style="left:783px;top:13px;width:11px;height:476px;border-radius:1px;background:linear-gradient(90deg,#c6cad0 0px,#c6cad0 1px,#f3f5f7 2px,#eceef1 6px,#d9dce0 8px,#cdd1d6 10px,#dde0e4 11px)"></div>
<div style="left:786px;top:248px;width:4px;height:4px;background:#c9cdd2"></div>
<svg style="position:absolute;left:783px;top:504px" width="10" height="9"><path d="M2 2.5 L8 2.5 L5 5.5 Z" fill="#4a4a4a"/></svg>
<div style="left:793px;top:0px;width:1px;height:13px;background:#f4f5f6"></div>
<div style="left:0px;top:513px;width:794px;height:10px;background:linear-gradient(#e8eaed,#dfe2e6)"></div>
<div style="left:0px;top:513px;width:794px;height:1px;background:#c5c9ce"></div>
<svg style="position:absolute;left:0;top:513px" width="40" height="10"><path d="M2 2.5 L2.8 2.5 L2.8 7.5 L2 7.5 Z M6 2.5 L3.5 5 L6 7.5 Z" fill="#444"/><path d="M14 2.5 L11.5 5 L14 7.5 Z" fill="#444"/><path d="M20 2.5 L22.5 5 L20 7.5 Z" fill="#444"/><path d="M28 2.5 L30.5 5 L28 7.5 Z M31 2.5 L31.8 2.5 L31.8 7.5 L31 7.5 Z" fill="#444"/><path d="M36.5 0 L36.5 10" stroke="#b0b5bb" stroke-width="1"/></svg>
<svg style="position:absolute;left:0;top:513px" width="794" height="11"><path d="M40.3 10 L48.5 0.8" fill="none" stroke="#a3a8af" stroke-width="0.9"/><path d="M155.7 10 L162.2 0.8" fill="none" stroke="#a3a8af" stroke-width="0.9"/><path d="M250.9 10 L259 0.8" fill="none" stroke="#a3a8af" stroke-width="0.9"/><path d="M380.2 10 L387.2 0.8" fill="none" stroke="#a3a8af" stroke-width="0.9"/><path d="M439.6 10 L446.7 0.8" fill="none" stroke="#a3a8af" stroke-width="0.9"/><path d="M648.5 10 L654.2 0.8" fill="none" stroke="#a3a8af" stroke-width="0.9"/><path d="M678 10 L684.2 0.8" fill="none" stroke="#a3a8af" stroke-width="0.9"/><path d="M708 10 L713.7 0.8" fill="none" stroke="#a3a8af" stroke-width="0.9"/><path d="M514.6 10 L514.6 0 L606.2 0 L598.1 10 Z" fill="#fff"/><path d="M514.6 0.5 L514.6 9.6" fill="none" stroke="#b0b5bb" stroke-width="0.8"/><path d="M598.1 10 L606.2 0.8" fill="none" stroke="#a3a8af" stroke-width="0.9"/></svg>
<div class="t" style="left:54px;top:513.72px;font-size:8.3px;line-height:11px;font-weight:400;color:#5e5e5e;transform:scaleX(0.87);transform-origin:left 0;">Added - Removed Activities</div>
<div class="t" style="left:168px;top:513.72px;font-size:8.3px;line-height:11px;font-weight:400;color:#5e5e5e;transform:scaleX(0.87);transform-origin:left 0;">Modified Relationships</div>
<div class="t" style="left:265px;top:513.72px;font-size:8.3px;line-height:11px;font-weight:400;color:#5e5e5e;transform:scaleX(0.87);transform-origin:left 0;">Modified Resource Assignments</div>
<div class="t" style="left:390.5px;top:513.72px;font-size:8.3px;line-height:11px;font-weight:400;color:#5e5e5e;transform:scaleX(0.87);transform-origin:left 0;">Activity Type</div>
<div class="t" style="left:451px;top:513.72px;font-size:8.3px;line-height:11px;font-weight:400;color:#5e5e5e;transform:scaleX(0.87);transform-origin:left 0;">Original Duration</div>
<div class="t" style="left:520px;top:513.72px;font-size:8.3px;line-height:11px;font-weight:700;color:#3a3a3a;transform:scaleX(0.93);transform-origin:left 0;">Remaining Duration</div>
<div class="t" style="left:607.5px;top:513.72px;font-size:8.3px;line-height:11px;font-weight:400;color:#5e5e5e;transform:scaleX(0.87);transform-origin:left 0;">Total Float</div>
<div class="t" style="left:655.5px;top:513.72px;font-size:8.3px;line-height:11px;font-weight:400;color:#5e5e5e;transform:scaleX(0.87);transform-origin:left 0;">Start</div>
<div class="t" style="left:685.5px;top:513.72px;font-size:8.3px;line-height:11px;font-weight:400;color:#4d4d4d;transform:scaleX(0.82);transform-origin:left 0;">Finish</div>
<div style="left:715px;top:514px;width:5px;height:9px;box-sizing:border-box;border:1px solid #8c9198;background:#fff"></div>
<svg style="position:absolute;left:720px;top:513px" width="74" height="10"><path d="M7 2.5 L4 5 L7 7.5 Z" fill="#333"/><rect x="10.5" y="0.5" width="34" height="9" rx="1.5" fill="#eef0f2" stroke="#b3b8be" stroke-width="0.8"/><rect x="25.5" y="3" width="4" height="4" fill="#c6cad0"/><path d="M56 2.5 L59 5 L56 7.5 Z" fill="#333"/></svg>
<div style="left:783px;top:513px;width:11px;height:10px;background:#e9ebee"></div>
<div style="left:0px;top:523px;width:794px;height:13px;background:linear-gradient(#eceef1,#d6d9de)"></div>
<div style="left:0px;top:523px;width:794px;height:1px;background:#c8ccd1"></div>
<div style="left:0px;top:536px;width:794px;height:1px;background:#7d8793"></div>
<div style="left:0px;top:537px;width:794px;height:2px;background:#f6f6f6"></div>
<div class="t" style="left:2.8px;top:524.87px;font-size:7.6px;line-height:10px;font-weight:400;color:#4d4d4d;transform:scaleX(0.86);transform-origin:left 0;">Ready</div>
<div style="left:27px;top:524px;width:1px;height:11px;background:#b9bec4"></div>
<div style="left:646px;top:524px;width:1px;height:11px;background:#b9bec4"></div>
<div style="left:650px;top:524.5px;width:11px;height:11px;box-sizing:border-box;border:1px solid #e8b84f;background:linear-gradient(#fde9a8,#f7d26a);border-radius:1px"></div>
<svg style="position:absolute;left:650px;top:524px" width="36" height="12"><rect x="2.5" y="3" width="6" height="6" fill="#fff" stroke="#7d7d7d" stroke-width="0.8"/><path d="M4.5 3 V9 M6.5 3 V9" stroke="#7d7d7d" stroke-width="0.7"/><rect x="13" y="2.5" width="8" height="7" fill="#b5b9bf" stroke="#888" stroke-width="0.8"/><rect x="15.5" y="4.5" width="3" height="3" fill="#eee"/><rect x="25" y="2.5" width="8" height="7" fill="#b5b9bf" stroke="#888" stroke-width="0.8"/><path d="M27.5 2.5 V6 M30 2.5 V6" stroke="#eee" stroke-width="1"/></svg>
<div class="t" style="left:689.5px;top:524.87px;font-size:7.6px;line-height:10px;font-weight:400;color:#4d4d4d;transform:scaleX(0.86);transform-origin:left 0;">100%</div>
<svg style="position:absolute;left:705px;top:522px" width="89" height="16"><circle cx="11.2" cy="7.5" r="4.6" fill="#f7f8f9" stroke="#9aa0a7" stroke-width="0.9"/><path d="M8.6 7.5 H13.8" stroke="#555" stroke-width="1.5"/><path d="M16 7.5 H77.5" stroke="#b9bec4" stroke-width="1"/><path d="M44.5 3 H49.5 V9 L47 11 L44.5 9 Z" fill="#f4f5f7" stroke="#8d939a" stroke-width="0.8"/><circle cx="82.7" cy="7.5" r="4.6" fill="#f7f8f9" stroke="#9aa0a7" stroke-width="0.9"/><path d="M80 7.5 H85.4 M82.7 4.8 V10.2" stroke="#555" stroke-width="1.5"/></svg>
</body></html>
